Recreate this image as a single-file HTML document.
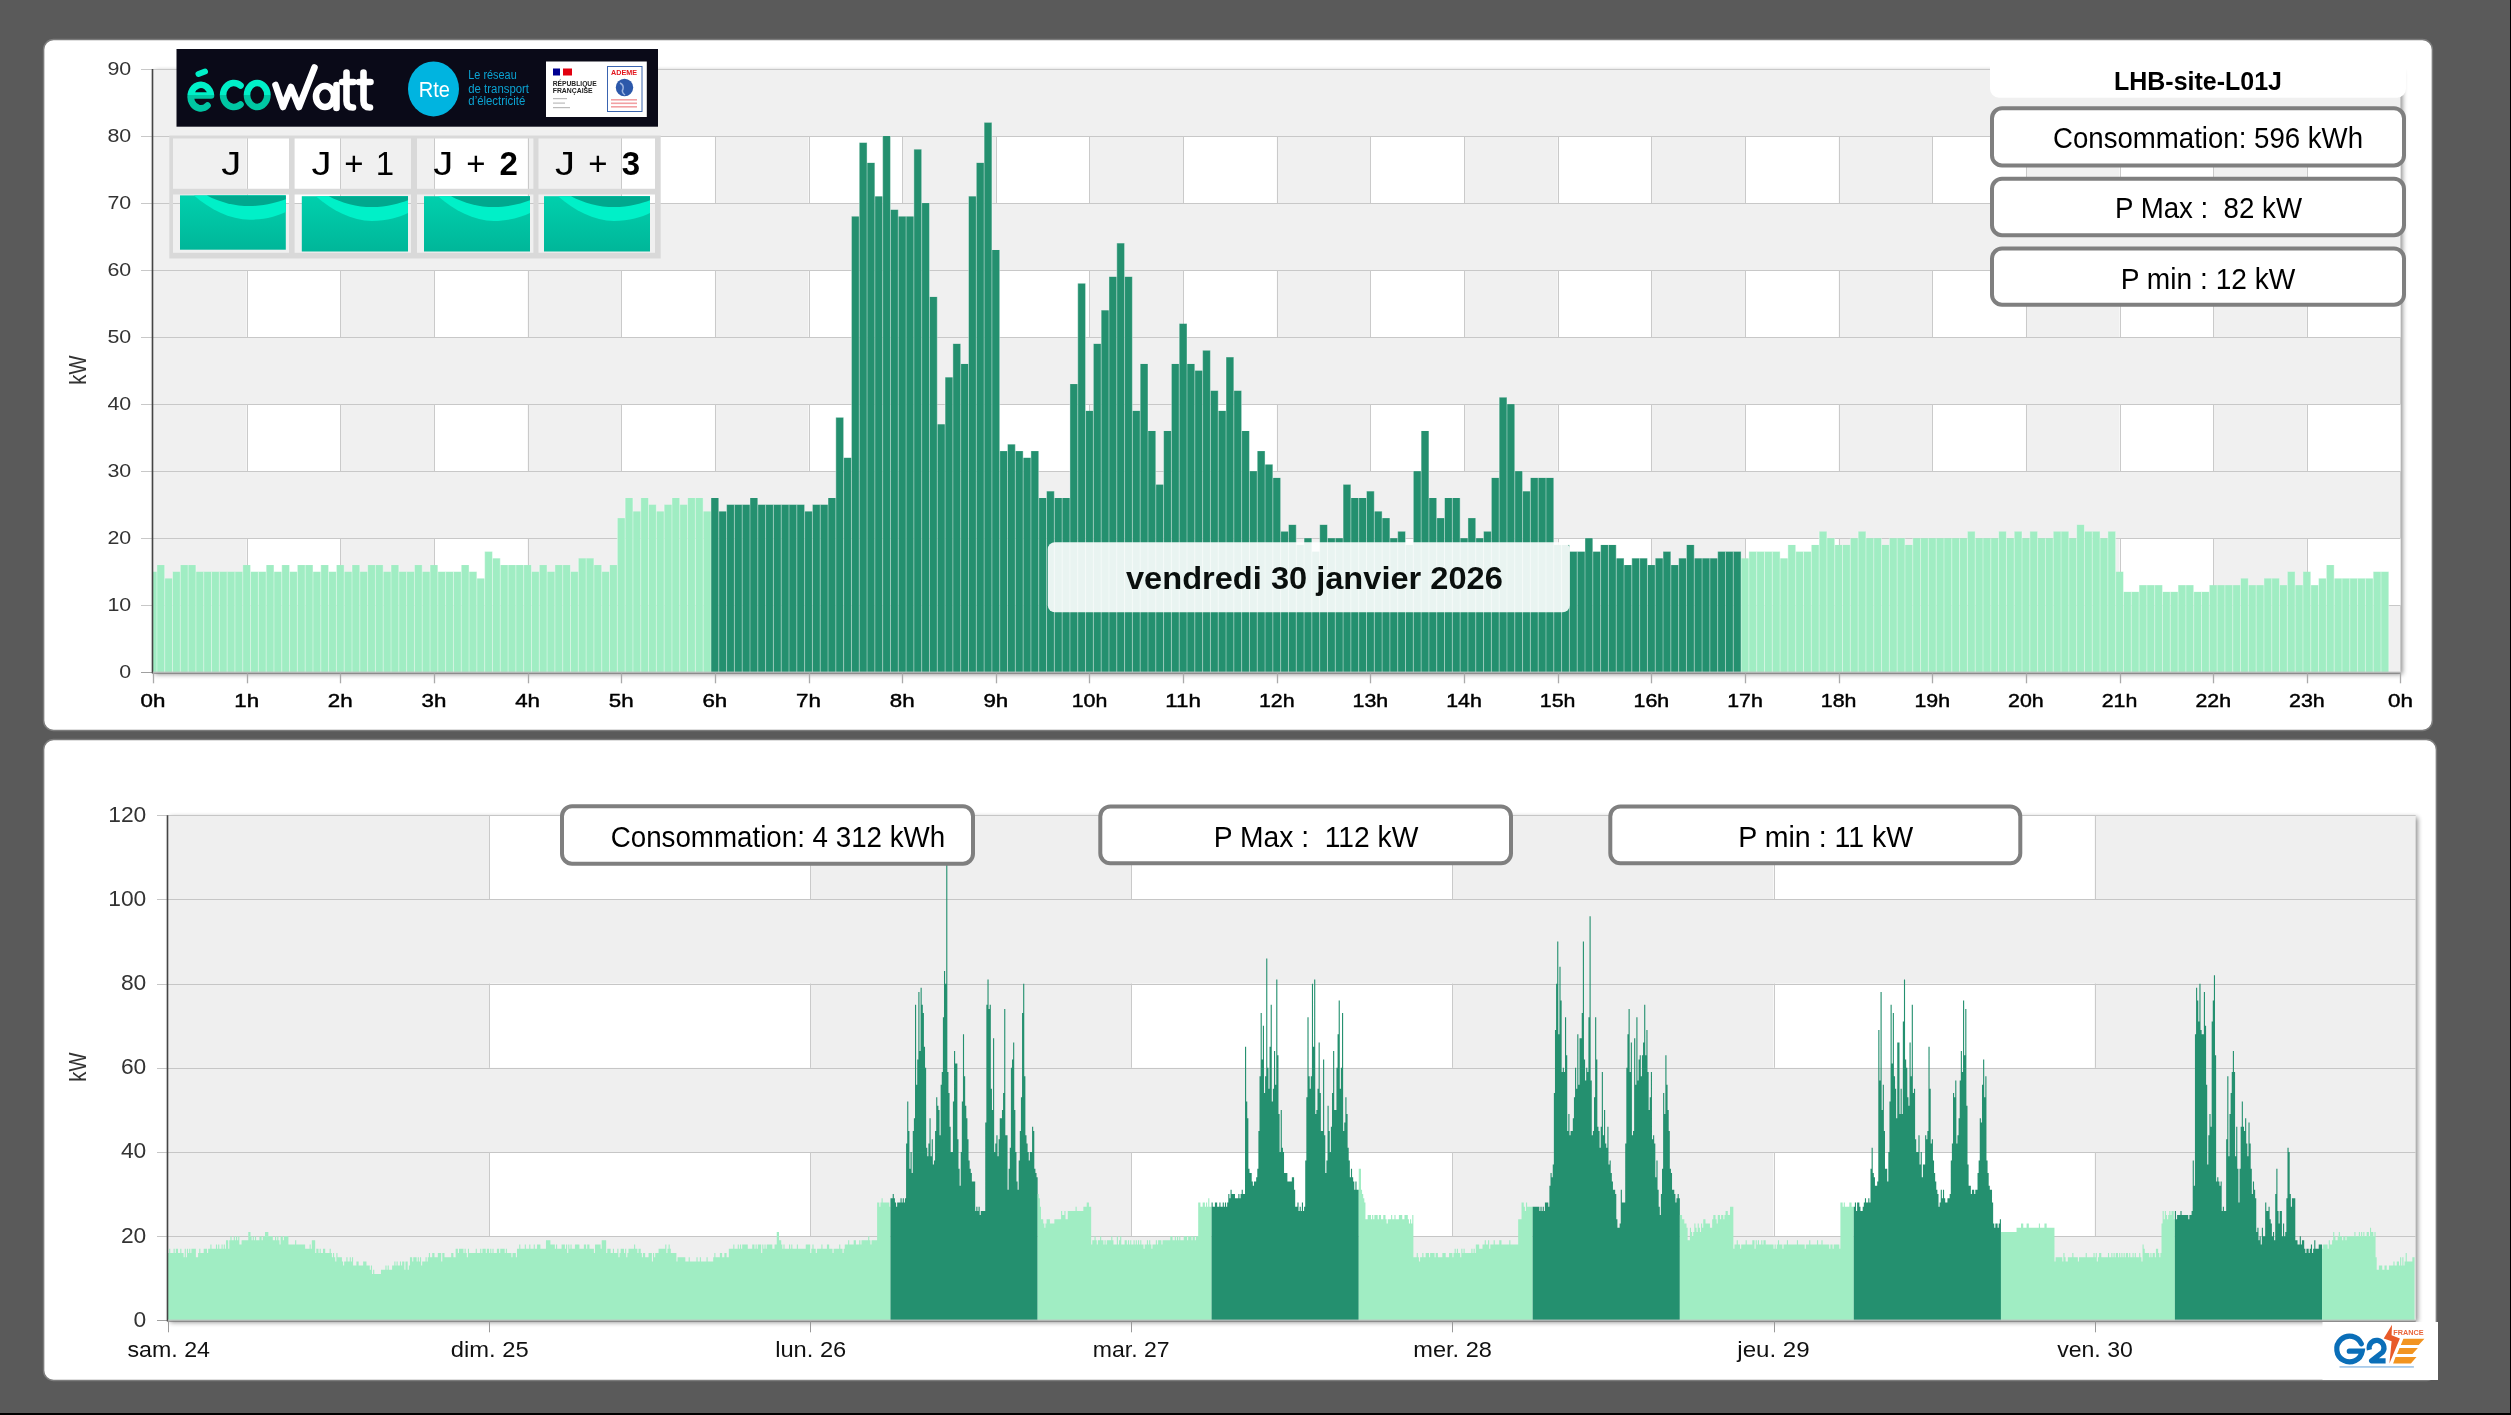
<!DOCTYPE html>
<html><head><meta charset="utf-8"><style>html,body{margin:0;padding:0;background:#5a5a5a;overflow:hidden;width:2511px;height:1415px} svg text{font-family:"Liberation Sans", sans-serif}</style></head>
<body><svg width="2511" height="1415" viewBox="0 0 2511 1415" style="display:block;will-change:transform"><rect x="0" y="0" width="2511" height="1415" fill="#5a5a5a"/>
<rect x="2510" y="0" width="1" height="1415" fill="#000"/>
<rect x="0" y="1413" width="2511" height="2" fill="#000"/>
<rect x="43.6" y="39.6" width="2388.8" height="690.8" rx="10" fill="#fff" stroke="#7c7c7c" stroke-width="1.5"/>
<rect x="43.6" y="739.6" width="2392.8" height="640.8" rx="10" fill="#fff" stroke="#7c7c7c" stroke-width="1.5"/>
<defs><filter id="sh" x="-5%" y="-5%" width="110%" height="110%"><feGaussianBlur stdDeviation="2.5"/></filter><linearGradient id="tealg" x1="0" y1="0" x2="0" y2="1"><stop offset="0" stop-color="#00d0ad"/><stop offset="1" stop-color="#00b699"/></linearGradient><linearGradient id="ecog" x1="0" y1="0" x2="0" y2="1"><stop offset="0.62" stop-color="#00f0c8"/><stop offset="0.62" stop-color="#00c4a2"/></linearGradient><linearGradient id="ecog2" gradientUnits="userSpaceOnUse" x1="0" y1="60" x2="0" y2="112"><stop offset="0.68" stop-color="#00f0c8"/><stop offset="0.68" stop-color="#00c6a3"/></linearGradient></defs>
<rect x="155.0" y="71.0" width="2247.5" height="603.3" fill="#000" opacity="0.45" filter="url(#sh)"/>
<rect x="153.0" y="69.0" width="2247.5" height="603.3" fill="#f0f0f0"/>
<rect x="246.65" y="538.23" width="93.65" height="67.03" fill="#fff"/>
<rect x="433.94" y="538.23" width="93.65" height="67.03" fill="#fff"/>
<rect x="621.23" y="538.23" width="93.65" height="67.03" fill="#fff"/>
<rect x="808.52" y="538.23" width="93.65" height="67.03" fill="#fff"/>
<rect x="995.81" y="538.23" width="93.65" height="67.03" fill="#fff"/>
<rect x="1183.10" y="538.23" width="93.65" height="67.03" fill="#fff"/>
<rect x="1370.40" y="538.23" width="93.65" height="67.03" fill="#fff"/>
<rect x="1557.69" y="538.23" width="93.65" height="67.03" fill="#fff"/>
<rect x="1744.98" y="538.23" width="93.65" height="67.03" fill="#fff"/>
<rect x="1932.27" y="538.23" width="93.65" height="67.03" fill="#fff"/>
<rect x="2119.56" y="538.23" width="93.65" height="67.03" fill="#fff"/>
<rect x="2306.85" y="538.23" width="93.65" height="67.03" fill="#fff"/>
<rect x="246.65" y="404.17" width="93.65" height="67.03" fill="#fff"/>
<rect x="433.94" y="404.17" width="93.65" height="67.03" fill="#fff"/>
<rect x="621.23" y="404.17" width="93.65" height="67.03" fill="#fff"/>
<rect x="808.52" y="404.17" width="93.65" height="67.03" fill="#fff"/>
<rect x="995.81" y="404.17" width="93.65" height="67.03" fill="#fff"/>
<rect x="1183.10" y="404.17" width="93.65" height="67.03" fill="#fff"/>
<rect x="1370.40" y="404.17" width="93.65" height="67.03" fill="#fff"/>
<rect x="1557.69" y="404.17" width="93.65" height="67.03" fill="#fff"/>
<rect x="1744.98" y="404.17" width="93.65" height="67.03" fill="#fff"/>
<rect x="1932.27" y="404.17" width="93.65" height="67.03" fill="#fff"/>
<rect x="2119.56" y="404.17" width="93.65" height="67.03" fill="#fff"/>
<rect x="2306.85" y="404.17" width="93.65" height="67.03" fill="#fff"/>
<rect x="246.65" y="270.10" width="93.65" height="67.03" fill="#fff"/>
<rect x="433.94" y="270.10" width="93.65" height="67.03" fill="#fff"/>
<rect x="621.23" y="270.10" width="93.65" height="67.03" fill="#fff"/>
<rect x="808.52" y="270.10" width="93.65" height="67.03" fill="#fff"/>
<rect x="995.81" y="270.10" width="93.65" height="67.03" fill="#fff"/>
<rect x="1183.10" y="270.10" width="93.65" height="67.03" fill="#fff"/>
<rect x="1370.40" y="270.10" width="93.65" height="67.03" fill="#fff"/>
<rect x="1557.69" y="270.10" width="93.65" height="67.03" fill="#fff"/>
<rect x="1744.98" y="270.10" width="93.65" height="67.03" fill="#fff"/>
<rect x="1932.27" y="270.10" width="93.65" height="67.03" fill="#fff"/>
<rect x="2119.56" y="270.10" width="93.65" height="67.03" fill="#fff"/>
<rect x="2306.85" y="270.10" width="93.65" height="67.03" fill="#fff"/>
<rect x="246.65" y="136.03" width="93.65" height="67.03" fill="#fff"/>
<rect x="433.94" y="136.03" width="93.65" height="67.03" fill="#fff"/>
<rect x="621.23" y="136.03" width="93.65" height="67.03" fill="#fff"/>
<rect x="808.52" y="136.03" width="93.65" height="67.03" fill="#fff"/>
<rect x="995.81" y="136.03" width="93.65" height="67.03" fill="#fff"/>
<rect x="1183.10" y="136.03" width="93.65" height="67.03" fill="#fff"/>
<rect x="1370.40" y="136.03" width="93.65" height="67.03" fill="#fff"/>
<rect x="1557.69" y="136.03" width="93.65" height="67.03" fill="#fff"/>
<rect x="1744.98" y="136.03" width="93.65" height="67.03" fill="#fff"/>
<rect x="1932.27" y="136.03" width="93.65" height="67.03" fill="#fff"/>
<rect x="2119.56" y="136.03" width="93.65" height="67.03" fill="#fff"/>
<rect x="2306.85" y="136.03" width="93.65" height="67.03" fill="#fff"/>
<line x1="141.0" y1="605.5" x2="2400.5" y2="605.5" stroke="#c8c8c8" stroke-width="1"/>
<line x1="141.0" y1="538.5" x2="2400.5" y2="538.5" stroke="#c8c8c8" stroke-width="1"/>
<line x1="141.0" y1="471.5" x2="2400.5" y2="471.5" stroke="#c8c8c8" stroke-width="1"/>
<line x1="141.0" y1="404.5" x2="2400.5" y2="404.5" stroke="#c8c8c8" stroke-width="1"/>
<line x1="141.0" y1="337.5" x2="2400.5" y2="337.5" stroke="#c8c8c8" stroke-width="1"/>
<line x1="141.0" y1="270.5" x2="2400.5" y2="270.5" stroke="#c8c8c8" stroke-width="1"/>
<line x1="141.0" y1="203.5" x2="2400.5" y2="203.5" stroke="#c8c8c8" stroke-width="1"/>
<line x1="141.0" y1="136.5" x2="2400.5" y2="136.5" stroke="#c8c8c8" stroke-width="1"/>
<line x1="141.0" y1="69.5" x2="2400.5" y2="69.5" stroke="#c8c8c8" stroke-width="1"/>
<line x1="247.5" y1="538.23" x2="247.5" y2="605.27" stroke="#cacaca" stroke-width="1"/>
<line x1="340.5" y1="538.23" x2="340.5" y2="605.27" stroke="#cacaca" stroke-width="1"/>
<line x1="434.5" y1="538.23" x2="434.5" y2="605.27" stroke="#cacaca" stroke-width="1"/>
<line x1="528.5" y1="538.23" x2="528.5" y2="605.27" stroke="#cacaca" stroke-width="1"/>
<line x1="621.5" y1="538.23" x2="621.5" y2="605.27" stroke="#cacaca" stroke-width="1"/>
<line x1="715.5" y1="538.23" x2="715.5" y2="605.27" stroke="#cacaca" stroke-width="1"/>
<line x1="809.5" y1="538.23" x2="809.5" y2="605.27" stroke="#cacaca" stroke-width="1"/>
<line x1="902.5" y1="538.23" x2="902.5" y2="605.27" stroke="#cacaca" stroke-width="1"/>
<line x1="996.5" y1="538.23" x2="996.5" y2="605.27" stroke="#cacaca" stroke-width="1"/>
<line x1="1089.5" y1="538.23" x2="1089.5" y2="605.27" stroke="#cacaca" stroke-width="1"/>
<line x1="1183.5" y1="538.23" x2="1183.5" y2="605.27" stroke="#cacaca" stroke-width="1"/>
<line x1="1277.5" y1="538.23" x2="1277.5" y2="605.27" stroke="#cacaca" stroke-width="1"/>
<line x1="1370.5" y1="538.23" x2="1370.5" y2="605.27" stroke="#cacaca" stroke-width="1"/>
<line x1="1464.5" y1="538.23" x2="1464.5" y2="605.27" stroke="#cacaca" stroke-width="1"/>
<line x1="1558.5" y1="538.23" x2="1558.5" y2="605.27" stroke="#cacaca" stroke-width="1"/>
<line x1="1651.5" y1="538.23" x2="1651.5" y2="605.27" stroke="#cacaca" stroke-width="1"/>
<line x1="1745.5" y1="538.23" x2="1745.5" y2="605.27" stroke="#cacaca" stroke-width="1"/>
<line x1="1839.5" y1="538.23" x2="1839.5" y2="605.27" stroke="#cacaca" stroke-width="1"/>
<line x1="1932.5" y1="538.23" x2="1932.5" y2="605.27" stroke="#cacaca" stroke-width="1"/>
<line x1="2026.5" y1="538.23" x2="2026.5" y2="605.27" stroke="#cacaca" stroke-width="1"/>
<line x1="2120.5" y1="538.23" x2="2120.5" y2="605.27" stroke="#cacaca" stroke-width="1"/>
<line x1="2213.5" y1="538.23" x2="2213.5" y2="605.27" stroke="#cacaca" stroke-width="1"/>
<line x1="2307.5" y1="538.23" x2="2307.5" y2="605.27" stroke="#cacaca" stroke-width="1"/>
<line x1="247.5" y1="404.17" x2="247.5" y2="471.20" stroke="#cacaca" stroke-width="1"/>
<line x1="340.5" y1="404.17" x2="340.5" y2="471.20" stroke="#cacaca" stroke-width="1"/>
<line x1="434.5" y1="404.17" x2="434.5" y2="471.20" stroke="#cacaca" stroke-width="1"/>
<line x1="528.5" y1="404.17" x2="528.5" y2="471.20" stroke="#cacaca" stroke-width="1"/>
<line x1="621.5" y1="404.17" x2="621.5" y2="471.20" stroke="#cacaca" stroke-width="1"/>
<line x1="715.5" y1="404.17" x2="715.5" y2="471.20" stroke="#cacaca" stroke-width="1"/>
<line x1="809.5" y1="404.17" x2="809.5" y2="471.20" stroke="#cacaca" stroke-width="1"/>
<line x1="902.5" y1="404.17" x2="902.5" y2="471.20" stroke="#cacaca" stroke-width="1"/>
<line x1="996.5" y1="404.17" x2="996.5" y2="471.20" stroke="#cacaca" stroke-width="1"/>
<line x1="1089.5" y1="404.17" x2="1089.5" y2="471.20" stroke="#cacaca" stroke-width="1"/>
<line x1="1183.5" y1="404.17" x2="1183.5" y2="471.20" stroke="#cacaca" stroke-width="1"/>
<line x1="1277.5" y1="404.17" x2="1277.5" y2="471.20" stroke="#cacaca" stroke-width="1"/>
<line x1="1370.5" y1="404.17" x2="1370.5" y2="471.20" stroke="#cacaca" stroke-width="1"/>
<line x1="1464.5" y1="404.17" x2="1464.5" y2="471.20" stroke="#cacaca" stroke-width="1"/>
<line x1="1558.5" y1="404.17" x2="1558.5" y2="471.20" stroke="#cacaca" stroke-width="1"/>
<line x1="1651.5" y1="404.17" x2="1651.5" y2="471.20" stroke="#cacaca" stroke-width="1"/>
<line x1="1745.5" y1="404.17" x2="1745.5" y2="471.20" stroke="#cacaca" stroke-width="1"/>
<line x1="1839.5" y1="404.17" x2="1839.5" y2="471.20" stroke="#cacaca" stroke-width="1"/>
<line x1="1932.5" y1="404.17" x2="1932.5" y2="471.20" stroke="#cacaca" stroke-width="1"/>
<line x1="2026.5" y1="404.17" x2="2026.5" y2="471.20" stroke="#cacaca" stroke-width="1"/>
<line x1="2120.5" y1="404.17" x2="2120.5" y2="471.20" stroke="#cacaca" stroke-width="1"/>
<line x1="2213.5" y1="404.17" x2="2213.5" y2="471.20" stroke="#cacaca" stroke-width="1"/>
<line x1="2307.5" y1="404.17" x2="2307.5" y2="471.20" stroke="#cacaca" stroke-width="1"/>
<line x1="247.5" y1="270.10" x2="247.5" y2="337.13" stroke="#cacaca" stroke-width="1"/>
<line x1="340.5" y1="270.10" x2="340.5" y2="337.13" stroke="#cacaca" stroke-width="1"/>
<line x1="434.5" y1="270.10" x2="434.5" y2="337.13" stroke="#cacaca" stroke-width="1"/>
<line x1="528.5" y1="270.10" x2="528.5" y2="337.13" stroke="#cacaca" stroke-width="1"/>
<line x1="621.5" y1="270.10" x2="621.5" y2="337.13" stroke="#cacaca" stroke-width="1"/>
<line x1="715.5" y1="270.10" x2="715.5" y2="337.13" stroke="#cacaca" stroke-width="1"/>
<line x1="809.5" y1="270.10" x2="809.5" y2="337.13" stroke="#cacaca" stroke-width="1"/>
<line x1="902.5" y1="270.10" x2="902.5" y2="337.13" stroke="#cacaca" stroke-width="1"/>
<line x1="996.5" y1="270.10" x2="996.5" y2="337.13" stroke="#cacaca" stroke-width="1"/>
<line x1="1089.5" y1="270.10" x2="1089.5" y2="337.13" stroke="#cacaca" stroke-width="1"/>
<line x1="1183.5" y1="270.10" x2="1183.5" y2="337.13" stroke="#cacaca" stroke-width="1"/>
<line x1="1277.5" y1="270.10" x2="1277.5" y2="337.13" stroke="#cacaca" stroke-width="1"/>
<line x1="1370.5" y1="270.10" x2="1370.5" y2="337.13" stroke="#cacaca" stroke-width="1"/>
<line x1="1464.5" y1="270.10" x2="1464.5" y2="337.13" stroke="#cacaca" stroke-width="1"/>
<line x1="1558.5" y1="270.10" x2="1558.5" y2="337.13" stroke="#cacaca" stroke-width="1"/>
<line x1="1651.5" y1="270.10" x2="1651.5" y2="337.13" stroke="#cacaca" stroke-width="1"/>
<line x1="1745.5" y1="270.10" x2="1745.5" y2="337.13" stroke="#cacaca" stroke-width="1"/>
<line x1="1839.5" y1="270.10" x2="1839.5" y2="337.13" stroke="#cacaca" stroke-width="1"/>
<line x1="1932.5" y1="270.10" x2="1932.5" y2="337.13" stroke="#cacaca" stroke-width="1"/>
<line x1="2026.5" y1="270.10" x2="2026.5" y2="337.13" stroke="#cacaca" stroke-width="1"/>
<line x1="2120.5" y1="270.10" x2="2120.5" y2="337.13" stroke="#cacaca" stroke-width="1"/>
<line x1="2213.5" y1="270.10" x2="2213.5" y2="337.13" stroke="#cacaca" stroke-width="1"/>
<line x1="2307.5" y1="270.10" x2="2307.5" y2="337.13" stroke="#cacaca" stroke-width="1"/>
<line x1="247.5" y1="136.03" x2="247.5" y2="203.07" stroke="#cacaca" stroke-width="1"/>
<line x1="340.5" y1="136.03" x2="340.5" y2="203.07" stroke="#cacaca" stroke-width="1"/>
<line x1="434.5" y1="136.03" x2="434.5" y2="203.07" stroke="#cacaca" stroke-width="1"/>
<line x1="528.5" y1="136.03" x2="528.5" y2="203.07" stroke="#cacaca" stroke-width="1"/>
<line x1="621.5" y1="136.03" x2="621.5" y2="203.07" stroke="#cacaca" stroke-width="1"/>
<line x1="715.5" y1="136.03" x2="715.5" y2="203.07" stroke="#cacaca" stroke-width="1"/>
<line x1="809.5" y1="136.03" x2="809.5" y2="203.07" stroke="#cacaca" stroke-width="1"/>
<line x1="902.5" y1="136.03" x2="902.5" y2="203.07" stroke="#cacaca" stroke-width="1"/>
<line x1="996.5" y1="136.03" x2="996.5" y2="203.07" stroke="#cacaca" stroke-width="1"/>
<line x1="1089.5" y1="136.03" x2="1089.5" y2="203.07" stroke="#cacaca" stroke-width="1"/>
<line x1="1183.5" y1="136.03" x2="1183.5" y2="203.07" stroke="#cacaca" stroke-width="1"/>
<line x1="1277.5" y1="136.03" x2="1277.5" y2="203.07" stroke="#cacaca" stroke-width="1"/>
<line x1="1370.5" y1="136.03" x2="1370.5" y2="203.07" stroke="#cacaca" stroke-width="1"/>
<line x1="1464.5" y1="136.03" x2="1464.5" y2="203.07" stroke="#cacaca" stroke-width="1"/>
<line x1="1558.5" y1="136.03" x2="1558.5" y2="203.07" stroke="#cacaca" stroke-width="1"/>
<line x1="1651.5" y1="136.03" x2="1651.5" y2="203.07" stroke="#cacaca" stroke-width="1"/>
<line x1="1745.5" y1="136.03" x2="1745.5" y2="203.07" stroke="#cacaca" stroke-width="1"/>
<line x1="1839.5" y1="136.03" x2="1839.5" y2="203.07" stroke="#cacaca" stroke-width="1"/>
<line x1="1932.5" y1="136.03" x2="1932.5" y2="203.07" stroke="#cacaca" stroke-width="1"/>
<line x1="2026.5" y1="136.03" x2="2026.5" y2="203.07" stroke="#cacaca" stroke-width="1"/>
<line x1="2120.5" y1="136.03" x2="2120.5" y2="203.07" stroke="#cacaca" stroke-width="1"/>
<line x1="2213.5" y1="136.03" x2="2213.5" y2="203.07" stroke="#cacaca" stroke-width="1"/>
<line x1="2307.5" y1="136.03" x2="2307.5" y2="203.07" stroke="#cacaca" stroke-width="1"/>
<line x1="141.0" y1="672.5" x2="153.0" y2="672.5" stroke="#a0a0a0" stroke-width="1"/>
<rect x="153.00" y="571.75" width="3.90" height="100.55" fill="#a0edc3"/>
<rect x="156.90" y="565.05" width="7.80" height="107.25" fill="#a0edc3"/>
<rect x="164.71" y="578.45" width="7.80" height="93.85" fill="#a0edc3"/>
<rect x="172.51" y="571.75" width="7.80" height="100.55" fill="#a0edc3"/>
<rect x="180.31" y="565.05" width="7.80" height="107.25" fill="#a0edc3"/>
<rect x="188.12" y="565.05" width="7.80" height="107.25" fill="#a0edc3"/>
<rect x="195.92" y="571.75" width="7.80" height="100.55" fill="#a0edc3"/>
<rect x="203.72" y="571.75" width="7.80" height="100.55" fill="#a0edc3"/>
<rect x="211.53" y="571.75" width="7.80" height="100.55" fill="#a0edc3"/>
<rect x="219.33" y="571.75" width="7.80" height="100.55" fill="#a0edc3"/>
<rect x="227.14" y="571.75" width="7.80" height="100.55" fill="#a0edc3"/>
<rect x="234.94" y="571.75" width="7.80" height="100.55" fill="#a0edc3"/>
<rect x="242.74" y="565.05" width="7.80" height="107.25" fill="#a0edc3"/>
<rect x="250.55" y="571.75" width="7.80" height="100.55" fill="#a0edc3"/>
<rect x="258.35" y="571.75" width="7.80" height="100.55" fill="#a0edc3"/>
<rect x="266.16" y="565.05" width="7.80" height="107.25" fill="#a0edc3"/>
<rect x="273.96" y="571.75" width="7.80" height="100.55" fill="#a0edc3"/>
<rect x="281.76" y="565.05" width="7.80" height="107.25" fill="#a0edc3"/>
<rect x="289.57" y="571.75" width="7.80" height="100.55" fill="#a0edc3"/>
<rect x="297.37" y="565.05" width="7.80" height="107.25" fill="#a0edc3"/>
<rect x="305.17" y="565.05" width="7.80" height="107.25" fill="#a0edc3"/>
<rect x="312.98" y="571.75" width="7.80" height="100.55" fill="#a0edc3"/>
<rect x="320.78" y="565.05" width="7.80" height="107.25" fill="#a0edc3"/>
<rect x="328.59" y="571.75" width="7.80" height="100.55" fill="#a0edc3"/>
<rect x="336.39" y="565.05" width="7.80" height="107.25" fill="#a0edc3"/>
<rect x="344.19" y="571.75" width="7.80" height="100.55" fill="#a0edc3"/>
<rect x="352.00" y="565.05" width="7.80" height="107.25" fill="#a0edc3"/>
<rect x="359.80" y="571.75" width="7.80" height="100.55" fill="#a0edc3"/>
<rect x="367.61" y="565.05" width="7.80" height="107.25" fill="#a0edc3"/>
<rect x="375.41" y="565.05" width="7.80" height="107.25" fill="#a0edc3"/>
<rect x="383.21" y="571.75" width="7.80" height="100.55" fill="#a0edc3"/>
<rect x="391.02" y="565.05" width="7.80" height="107.25" fill="#a0edc3"/>
<rect x="398.82" y="571.75" width="7.80" height="100.55" fill="#a0edc3"/>
<rect x="406.62" y="571.75" width="7.80" height="100.55" fill="#a0edc3"/>
<rect x="414.43" y="565.05" width="7.80" height="107.25" fill="#a0edc3"/>
<rect x="422.23" y="571.75" width="7.80" height="100.55" fill="#a0edc3"/>
<rect x="430.04" y="565.05" width="7.80" height="107.25" fill="#a0edc3"/>
<rect x="437.84" y="571.75" width="7.80" height="100.55" fill="#a0edc3"/>
<rect x="445.64" y="571.75" width="7.80" height="100.55" fill="#a0edc3"/>
<rect x="453.45" y="571.75" width="7.80" height="100.55" fill="#a0edc3"/>
<rect x="461.25" y="565.05" width="7.80" height="107.25" fill="#a0edc3"/>
<rect x="469.05" y="571.75" width="7.80" height="100.55" fill="#a0edc3"/>
<rect x="476.86" y="578.45" width="7.80" height="93.85" fill="#a0edc3"/>
<rect x="484.66" y="551.64" width="7.80" height="120.66" fill="#a0edc3"/>
<rect x="492.47" y="558.34" width="7.80" height="113.96" fill="#a0edc3"/>
<rect x="500.27" y="565.05" width="7.80" height="107.25" fill="#a0edc3"/>
<rect x="508.07" y="565.05" width="7.80" height="107.25" fill="#a0edc3"/>
<rect x="515.88" y="565.05" width="7.80" height="107.25" fill="#a0edc3"/>
<rect x="523.68" y="565.05" width="7.80" height="107.25" fill="#a0edc3"/>
<rect x="531.49" y="571.75" width="7.80" height="100.55" fill="#a0edc3"/>
<rect x="539.29" y="565.05" width="7.80" height="107.25" fill="#a0edc3"/>
<rect x="547.09" y="571.75" width="7.80" height="100.55" fill="#a0edc3"/>
<rect x="554.90" y="565.05" width="7.80" height="107.25" fill="#a0edc3"/>
<rect x="562.70" y="565.05" width="7.80" height="107.25" fill="#a0edc3"/>
<rect x="570.50" y="571.75" width="7.80" height="100.55" fill="#a0edc3"/>
<rect x="578.31" y="558.34" width="7.80" height="113.96" fill="#a0edc3"/>
<rect x="586.11" y="558.34" width="7.80" height="113.96" fill="#a0edc3"/>
<rect x="593.92" y="565.05" width="7.80" height="107.25" fill="#a0edc3"/>
<rect x="601.72" y="571.75" width="7.80" height="100.55" fill="#a0edc3"/>
<rect x="609.52" y="565.05" width="7.80" height="107.25" fill="#a0edc3"/>
<rect x="617.33" y="518.12" width="7.80" height="154.18" fill="#a0edc3"/>
<rect x="625.13" y="498.01" width="7.80" height="174.29" fill="#a0edc3"/>
<rect x="632.93" y="511.42" width="7.80" height="160.88" fill="#a0edc3"/>
<rect x="640.74" y="498.01" width="7.80" height="174.29" fill="#a0edc3"/>
<rect x="648.54" y="504.72" width="7.80" height="167.58" fill="#a0edc3"/>
<rect x="656.35" y="511.42" width="7.80" height="160.88" fill="#a0edc3"/>
<rect x="664.15" y="504.72" width="7.80" height="167.58" fill="#a0edc3"/>
<rect x="671.95" y="498.01" width="7.80" height="174.29" fill="#a0edc3"/>
<rect x="679.76" y="504.72" width="7.80" height="167.58" fill="#a0edc3"/>
<rect x="687.56" y="498.01" width="7.80" height="174.29" fill="#a0edc3"/>
<rect x="695.37" y="498.01" width="7.80" height="174.29" fill="#a0edc3"/>
<rect x="703.17" y="511.42" width="7.80" height="160.88" fill="#a0edc3"/>
<rect x="710.97" y="498.01" width="7.80" height="174.29" fill="#24906f"/>
<rect x="718.78" y="511.42" width="7.80" height="160.88" fill="#24906f"/>
<rect x="726.58" y="504.72" width="7.80" height="167.58" fill="#24906f"/>
<rect x="734.38" y="504.72" width="7.80" height="167.58" fill="#24906f"/>
<rect x="742.19" y="504.72" width="7.80" height="167.58" fill="#24906f"/>
<rect x="749.99" y="498.01" width="7.80" height="174.29" fill="#24906f"/>
<rect x="757.80" y="504.72" width="7.80" height="167.58" fill="#24906f"/>
<rect x="765.60" y="504.72" width="7.80" height="167.58" fill="#24906f"/>
<rect x="773.40" y="504.72" width="7.80" height="167.58" fill="#24906f"/>
<rect x="781.21" y="504.72" width="7.80" height="167.58" fill="#24906f"/>
<rect x="789.01" y="504.72" width="7.80" height="167.58" fill="#24906f"/>
<rect x="796.82" y="504.72" width="7.80" height="167.58" fill="#24906f"/>
<rect x="804.62" y="511.42" width="7.80" height="160.88" fill="#24906f"/>
<rect x="812.42" y="504.72" width="7.80" height="167.58" fill="#24906f"/>
<rect x="820.23" y="504.72" width="7.80" height="167.58" fill="#24906f"/>
<rect x="828.03" y="498.01" width="7.80" height="174.29" fill="#24906f"/>
<rect x="835.83" y="417.57" width="7.80" height="254.73" fill="#24906f"/>
<rect x="843.64" y="457.79" width="7.80" height="214.51" fill="#24906f"/>
<rect x="851.44" y="216.47" width="7.80" height="455.83" fill="#24906f"/>
<rect x="859.25" y="142.74" width="7.80" height="529.56" fill="#24906f"/>
<rect x="867.05" y="162.85" width="7.80" height="509.45" fill="#24906f"/>
<rect x="874.85" y="196.36" width="7.80" height="475.94" fill="#24906f"/>
<rect x="882.66" y="136.03" width="7.80" height="536.27" fill="#24906f"/>
<rect x="890.46" y="209.77" width="7.80" height="462.53" fill="#24906f"/>
<rect x="898.26" y="216.47" width="7.80" height="455.83" fill="#24906f"/>
<rect x="906.07" y="216.47" width="7.80" height="455.83" fill="#24906f"/>
<rect x="913.87" y="149.44" width="7.80" height="522.86" fill="#24906f"/>
<rect x="921.68" y="203.07" width="7.80" height="469.23" fill="#24906f"/>
<rect x="929.48" y="296.91" width="7.80" height="375.39" fill="#24906f"/>
<rect x="937.28" y="424.28" width="7.80" height="248.02" fill="#24906f"/>
<rect x="945.09" y="377.35" width="7.80" height="294.95" fill="#24906f"/>
<rect x="952.89" y="343.84" width="7.80" height="328.46" fill="#24906f"/>
<rect x="960.70" y="363.95" width="7.80" height="308.35" fill="#24906f"/>
<rect x="968.50" y="196.36" width="7.80" height="475.94" fill="#24906f"/>
<rect x="976.30" y="162.85" width="7.80" height="509.45" fill="#24906f"/>
<rect x="984.11" y="122.63" width="7.80" height="549.67" fill="#24906f"/>
<rect x="991.91" y="249.99" width="7.80" height="422.31" fill="#24906f"/>
<rect x="999.71" y="451.09" width="7.80" height="221.21" fill="#24906f"/>
<rect x="1007.52" y="444.39" width="7.80" height="227.91" fill="#24906f"/>
<rect x="1015.32" y="451.09" width="7.80" height="221.21" fill="#24906f"/>
<rect x="1023.13" y="457.79" width="7.80" height="214.51" fill="#24906f"/>
<rect x="1030.93" y="451.09" width="7.80" height="221.21" fill="#24906f"/>
<rect x="1038.73" y="498.01" width="7.80" height="174.29" fill="#24906f"/>
<rect x="1046.54" y="491.31" width="7.80" height="180.99" fill="#24906f"/>
<rect x="1054.34" y="498.01" width="7.80" height="174.29" fill="#24906f"/>
<rect x="1062.14" y="498.01" width="7.80" height="174.29" fill="#24906f"/>
<rect x="1069.95" y="384.06" width="7.80" height="288.24" fill="#24906f"/>
<rect x="1077.75" y="283.51" width="7.80" height="388.79" fill="#24906f"/>
<rect x="1085.56" y="410.87" width="7.80" height="261.43" fill="#24906f"/>
<rect x="1093.36" y="343.84" width="7.80" height="328.46" fill="#24906f"/>
<rect x="1101.16" y="310.32" width="7.80" height="361.98" fill="#24906f"/>
<rect x="1108.97" y="276.80" width="7.80" height="395.50" fill="#24906f"/>
<rect x="1116.77" y="243.29" width="7.80" height="429.01" fill="#24906f"/>
<rect x="1124.58" y="276.80" width="7.80" height="395.50" fill="#24906f"/>
<rect x="1132.38" y="410.87" width="7.80" height="261.43" fill="#24906f"/>
<rect x="1140.18" y="363.95" width="7.80" height="308.35" fill="#24906f"/>
<rect x="1147.99" y="430.98" width="7.80" height="241.32" fill="#24906f"/>
<rect x="1155.79" y="484.61" width="7.80" height="187.69" fill="#24906f"/>
<rect x="1163.59" y="430.98" width="7.80" height="241.32" fill="#24906f"/>
<rect x="1171.40" y="363.95" width="7.80" height="308.35" fill="#24906f"/>
<rect x="1179.20" y="323.73" width="7.80" height="348.57" fill="#24906f"/>
<rect x="1187.01" y="363.95" width="7.80" height="308.35" fill="#24906f"/>
<rect x="1194.81" y="370.65" width="7.80" height="301.65" fill="#24906f"/>
<rect x="1202.61" y="350.54" width="7.80" height="321.76" fill="#24906f"/>
<rect x="1210.42" y="390.76" width="7.80" height="281.54" fill="#24906f"/>
<rect x="1218.22" y="410.87" width="7.80" height="261.43" fill="#24906f"/>
<rect x="1226.03" y="357.24" width="7.80" height="315.06" fill="#24906f"/>
<rect x="1233.83" y="390.76" width="7.80" height="281.54" fill="#24906f"/>
<rect x="1241.63" y="430.98" width="7.80" height="241.32" fill="#24906f"/>
<rect x="1249.44" y="471.20" width="7.80" height="201.10" fill="#24906f"/>
<rect x="1257.24" y="451.09" width="7.80" height="221.21" fill="#24906f"/>
<rect x="1265.04" y="464.50" width="7.80" height="207.80" fill="#24906f"/>
<rect x="1272.85" y="477.90" width="7.80" height="194.40" fill="#24906f"/>
<rect x="1280.65" y="531.53" width="7.80" height="140.77" fill="#24906f"/>
<rect x="1288.46" y="524.83" width="7.80" height="147.47" fill="#24906f"/>
<rect x="1296.26" y="544.94" width="7.80" height="127.36" fill="#24906f"/>
<rect x="1304.06" y="538.23" width="7.80" height="134.07" fill="#24906f"/>
<rect x="1311.87" y="551.64" width="7.80" height="120.66" fill="#24906f"/>
<rect x="1319.67" y="524.83" width="7.80" height="147.47" fill="#24906f"/>
<rect x="1327.47" y="538.23" width="7.80" height="134.07" fill="#24906f"/>
<rect x="1335.28" y="538.23" width="7.80" height="134.07" fill="#24906f"/>
<rect x="1343.08" y="484.61" width="7.80" height="187.69" fill="#24906f"/>
<rect x="1350.89" y="498.01" width="7.80" height="174.29" fill="#24906f"/>
<rect x="1358.69" y="498.01" width="7.80" height="174.29" fill="#24906f"/>
<rect x="1366.49" y="491.31" width="7.80" height="180.99" fill="#24906f"/>
<rect x="1374.30" y="511.42" width="7.80" height="160.88" fill="#24906f"/>
<rect x="1382.10" y="518.12" width="7.80" height="154.18" fill="#24906f"/>
<rect x="1389.91" y="538.23" width="7.80" height="134.07" fill="#24906f"/>
<rect x="1397.71" y="531.53" width="7.80" height="140.77" fill="#24906f"/>
<rect x="1405.51" y="544.94" width="7.80" height="127.36" fill="#24906f"/>
<rect x="1413.32" y="471.20" width="7.80" height="201.10" fill="#24906f"/>
<rect x="1421.12" y="430.98" width="7.80" height="241.32" fill="#24906f"/>
<rect x="1428.92" y="498.01" width="7.80" height="174.29" fill="#24906f"/>
<rect x="1436.73" y="518.12" width="7.80" height="154.18" fill="#24906f"/>
<rect x="1444.53" y="498.01" width="7.80" height="174.29" fill="#24906f"/>
<rect x="1452.34" y="498.01" width="7.80" height="174.29" fill="#24906f"/>
<rect x="1460.14" y="538.23" width="7.80" height="134.07" fill="#24906f"/>
<rect x="1467.94" y="518.12" width="7.80" height="154.18" fill="#24906f"/>
<rect x="1475.75" y="538.23" width="7.80" height="134.07" fill="#24906f"/>
<rect x="1483.55" y="531.53" width="7.80" height="140.77" fill="#24906f"/>
<rect x="1491.36" y="477.90" width="7.80" height="194.40" fill="#24906f"/>
<rect x="1499.16" y="397.46" width="7.80" height="274.84" fill="#24906f"/>
<rect x="1506.96" y="404.17" width="7.80" height="268.13" fill="#24906f"/>
<rect x="1514.77" y="471.20" width="7.80" height="201.10" fill="#24906f"/>
<rect x="1522.57" y="491.31" width="7.80" height="180.99" fill="#24906f"/>
<rect x="1530.37" y="477.90" width="7.80" height="194.40" fill="#24906f"/>
<rect x="1538.18" y="477.90" width="7.80" height="194.40" fill="#24906f"/>
<rect x="1545.98" y="477.90" width="7.80" height="194.40" fill="#24906f"/>
<rect x="1553.79" y="544.94" width="7.80" height="127.36" fill="#24906f"/>
<rect x="1561.59" y="544.94" width="7.80" height="127.36" fill="#24906f"/>
<rect x="1569.39" y="551.64" width="7.80" height="120.66" fill="#24906f"/>
<rect x="1577.20" y="551.64" width="7.80" height="120.66" fill="#24906f"/>
<rect x="1585.00" y="538.23" width="7.80" height="134.07" fill="#24906f"/>
<rect x="1592.80" y="551.64" width="7.80" height="120.66" fill="#24906f"/>
<rect x="1600.61" y="544.94" width="7.80" height="127.36" fill="#24906f"/>
<rect x="1608.41" y="544.94" width="7.80" height="127.36" fill="#24906f"/>
<rect x="1616.22" y="558.34" width="7.80" height="113.96" fill="#24906f"/>
<rect x="1624.02" y="565.05" width="7.80" height="107.25" fill="#24906f"/>
<rect x="1631.82" y="558.34" width="7.80" height="113.96" fill="#24906f"/>
<rect x="1639.63" y="558.34" width="7.80" height="113.96" fill="#24906f"/>
<rect x="1647.43" y="565.05" width="7.80" height="107.25" fill="#24906f"/>
<rect x="1655.24" y="558.34" width="7.80" height="113.96" fill="#24906f"/>
<rect x="1663.04" y="551.64" width="7.80" height="120.66" fill="#24906f"/>
<rect x="1670.84" y="565.05" width="7.80" height="107.25" fill="#24906f"/>
<rect x="1678.65" y="558.34" width="7.80" height="113.96" fill="#24906f"/>
<rect x="1686.45" y="544.94" width="7.80" height="127.36" fill="#24906f"/>
<rect x="1694.25" y="558.34" width="7.80" height="113.96" fill="#24906f"/>
<rect x="1702.06" y="558.34" width="7.80" height="113.96" fill="#24906f"/>
<rect x="1709.86" y="558.34" width="7.80" height="113.96" fill="#24906f"/>
<rect x="1717.67" y="551.64" width="7.80" height="120.66" fill="#24906f"/>
<rect x="1725.47" y="551.64" width="7.80" height="120.66" fill="#24906f"/>
<rect x="1733.27" y="551.64" width="7.80" height="120.66" fill="#24906f"/>
<rect x="1741.08" y="558.34" width="7.80" height="113.96" fill="#a0edc3"/>
<rect x="1748.88" y="551.64" width="7.80" height="120.66" fill="#a0edc3"/>
<rect x="1756.68" y="551.64" width="7.80" height="120.66" fill="#a0edc3"/>
<rect x="1764.49" y="551.64" width="7.80" height="120.66" fill="#a0edc3"/>
<rect x="1772.29" y="551.64" width="7.80" height="120.66" fill="#a0edc3"/>
<rect x="1780.10" y="558.34" width="7.80" height="113.96" fill="#a0edc3"/>
<rect x="1787.90" y="544.94" width="7.80" height="127.36" fill="#a0edc3"/>
<rect x="1795.70" y="551.64" width="7.80" height="120.66" fill="#a0edc3"/>
<rect x="1803.51" y="551.64" width="7.80" height="120.66" fill="#a0edc3"/>
<rect x="1811.31" y="544.94" width="7.80" height="127.36" fill="#a0edc3"/>
<rect x="1819.12" y="531.53" width="7.80" height="140.77" fill="#a0edc3"/>
<rect x="1826.92" y="538.23" width="7.80" height="134.07" fill="#a0edc3"/>
<rect x="1834.72" y="544.94" width="7.80" height="127.36" fill="#a0edc3"/>
<rect x="1842.53" y="544.94" width="7.80" height="127.36" fill="#a0edc3"/>
<rect x="1850.33" y="538.23" width="7.80" height="134.07" fill="#a0edc3"/>
<rect x="1858.13" y="531.53" width="7.80" height="140.77" fill="#a0edc3"/>
<rect x="1865.94" y="538.23" width="7.80" height="134.07" fill="#a0edc3"/>
<rect x="1873.74" y="538.23" width="7.80" height="134.07" fill="#a0edc3"/>
<rect x="1881.55" y="544.94" width="7.80" height="127.36" fill="#a0edc3"/>
<rect x="1889.35" y="538.23" width="7.80" height="134.07" fill="#a0edc3"/>
<rect x="1897.15" y="538.23" width="7.80" height="134.07" fill="#a0edc3"/>
<rect x="1904.96" y="544.94" width="7.80" height="127.36" fill="#a0edc3"/>
<rect x="1912.76" y="538.23" width="7.80" height="134.07" fill="#a0edc3"/>
<rect x="1920.57" y="538.23" width="7.80" height="134.07" fill="#a0edc3"/>
<rect x="1928.37" y="538.23" width="7.80" height="134.07" fill="#a0edc3"/>
<rect x="1936.17" y="538.23" width="7.80" height="134.07" fill="#a0edc3"/>
<rect x="1943.98" y="538.23" width="7.80" height="134.07" fill="#a0edc3"/>
<rect x="1951.78" y="538.23" width="7.80" height="134.07" fill="#a0edc3"/>
<rect x="1959.58" y="538.23" width="7.80" height="134.07" fill="#a0edc3"/>
<rect x="1967.39" y="531.53" width="7.80" height="140.77" fill="#a0edc3"/>
<rect x="1975.19" y="538.23" width="7.80" height="134.07" fill="#a0edc3"/>
<rect x="1983.00" y="538.23" width="7.80" height="134.07" fill="#a0edc3"/>
<rect x="1990.80" y="538.23" width="7.80" height="134.07" fill="#a0edc3"/>
<rect x="1998.60" y="531.53" width="7.80" height="140.77" fill="#a0edc3"/>
<rect x="2006.41" y="538.23" width="7.80" height="134.07" fill="#a0edc3"/>
<rect x="2014.21" y="531.53" width="7.80" height="140.77" fill="#a0edc3"/>
<rect x="2022.01" y="538.23" width="7.80" height="134.07" fill="#a0edc3"/>
<rect x="2029.82" y="531.53" width="7.80" height="140.77" fill="#a0edc3"/>
<rect x="2037.62" y="538.23" width="7.80" height="134.07" fill="#a0edc3"/>
<rect x="2045.43" y="538.23" width="7.80" height="134.07" fill="#a0edc3"/>
<rect x="2053.23" y="531.53" width="7.80" height="140.77" fill="#a0edc3"/>
<rect x="2061.03" y="531.53" width="7.80" height="140.77" fill="#a0edc3"/>
<rect x="2068.84" y="538.23" width="7.80" height="134.07" fill="#a0edc3"/>
<rect x="2076.64" y="524.83" width="7.80" height="147.47" fill="#a0edc3"/>
<rect x="2084.45" y="531.53" width="7.80" height="140.77" fill="#a0edc3"/>
<rect x="2092.25" y="531.53" width="7.80" height="140.77" fill="#a0edc3"/>
<rect x="2100.05" y="538.23" width="7.80" height="134.07" fill="#a0edc3"/>
<rect x="2107.86" y="531.53" width="7.80" height="140.77" fill="#a0edc3"/>
<rect x="2115.66" y="571.75" width="7.80" height="100.55" fill="#a0edc3"/>
<rect x="2123.46" y="591.86" width="7.80" height="80.44" fill="#a0edc3"/>
<rect x="2131.27" y="591.86" width="7.80" height="80.44" fill="#a0edc3"/>
<rect x="2139.07" y="585.16" width="7.80" height="87.14" fill="#a0edc3"/>
<rect x="2146.88" y="585.16" width="7.80" height="87.14" fill="#a0edc3"/>
<rect x="2154.68" y="585.16" width="7.80" height="87.14" fill="#a0edc3"/>
<rect x="2162.48" y="591.86" width="7.80" height="80.44" fill="#a0edc3"/>
<rect x="2170.29" y="591.86" width="7.80" height="80.44" fill="#a0edc3"/>
<rect x="2178.09" y="585.16" width="7.80" height="87.14" fill="#a0edc3"/>
<rect x="2185.89" y="585.16" width="7.80" height="87.14" fill="#a0edc3"/>
<rect x="2193.70" y="591.86" width="7.80" height="80.44" fill="#a0edc3"/>
<rect x="2201.50" y="591.86" width="7.80" height="80.44" fill="#a0edc3"/>
<rect x="2209.31" y="585.16" width="7.80" height="87.14" fill="#a0edc3"/>
<rect x="2217.11" y="585.16" width="7.80" height="87.14" fill="#a0edc3"/>
<rect x="2224.91" y="585.16" width="7.80" height="87.14" fill="#a0edc3"/>
<rect x="2232.72" y="585.16" width="7.80" height="87.14" fill="#a0edc3"/>
<rect x="2240.52" y="578.45" width="7.80" height="93.85" fill="#a0edc3"/>
<rect x="2248.33" y="585.16" width="7.80" height="87.14" fill="#a0edc3"/>
<rect x="2256.13" y="585.16" width="7.80" height="87.14" fill="#a0edc3"/>
<rect x="2263.93" y="578.45" width="7.80" height="93.85" fill="#a0edc3"/>
<rect x="2271.74" y="578.45" width="7.80" height="93.85" fill="#a0edc3"/>
<rect x="2279.54" y="585.16" width="7.80" height="87.14" fill="#a0edc3"/>
<rect x="2287.34" y="571.75" width="7.80" height="100.55" fill="#a0edc3"/>
<rect x="2295.15" y="585.16" width="7.80" height="87.14" fill="#a0edc3"/>
<rect x="2302.95" y="571.75" width="7.80" height="100.55" fill="#a0edc3"/>
<rect x="2310.76" y="585.16" width="7.80" height="87.14" fill="#a0edc3"/>
<rect x="2318.56" y="578.45" width="7.80" height="93.85" fill="#a0edc3"/>
<rect x="2326.36" y="565.05" width="7.80" height="107.25" fill="#a0edc3"/>
<rect x="2334.17" y="578.45" width="7.80" height="93.85" fill="#a0edc3"/>
<rect x="2341.97" y="578.45" width="7.80" height="93.85" fill="#a0edc3"/>
<rect x="2349.78" y="578.45" width="7.80" height="93.85" fill="#a0edc3"/>
<rect x="2357.58" y="578.45" width="7.80" height="93.85" fill="#a0edc3"/>
<rect x="2365.38" y="578.45" width="7.80" height="93.85" fill="#a0edc3"/>
<rect x="2373.19" y="571.75" width="7.80" height="100.55" fill="#a0edc3"/>
<rect x="2380.99" y="571.75" width="7.80" height="100.55" fill="#a0edc3"/>
<path d="M156.90,565.05V672.3M164.71,565.05V672.3M172.51,571.75V672.3M180.31,565.05V672.3M188.12,565.05V672.3M195.92,565.05V672.3M203.72,571.75V672.3M211.53,571.75V672.3M219.33,571.75V672.3M227.14,571.75V672.3M234.94,571.75V672.3M242.74,565.05V672.3M250.55,565.05V672.3M258.35,571.75V672.3M266.16,565.05V672.3M273.96,565.05V672.3M281.76,565.05V672.3M289.57,565.05V672.3M297.37,565.05V672.3M305.17,565.05V672.3M312.98,565.05V672.3M320.78,565.05V672.3M328.59,565.05V672.3M336.39,565.05V672.3M344.19,565.05V672.3M352.00,565.05V672.3M359.80,565.05V672.3M367.61,565.05V672.3M375.41,565.05V672.3M383.21,565.05V672.3M391.02,565.05V672.3M398.82,565.05V672.3M406.62,571.75V672.3M414.43,565.05V672.3M422.23,565.05V672.3M430.04,565.05V672.3M437.84,565.05V672.3M445.64,571.75V672.3M453.45,571.75V672.3M461.25,565.05V672.3M469.05,565.05V672.3M476.86,571.75V672.3M484.66,551.64V672.3M492.47,551.64V672.3M500.27,558.34V672.3M508.07,565.05V672.3M515.88,565.05V672.3M523.68,565.05V672.3M531.49,565.05V672.3M539.29,565.05V672.3M547.09,565.05V672.3M554.90,565.05V672.3M562.70,565.05V672.3M570.50,565.05V672.3M578.31,558.34V672.3M586.11,558.34V672.3M593.92,558.34V672.3M601.72,565.05V672.3M609.52,565.05V672.3M617.33,518.12V672.3M625.13,498.01V672.3M632.93,498.01V672.3M640.74,498.01V672.3M648.54,498.01V672.3M656.35,504.72V672.3M664.15,504.72V672.3M671.95,498.01V672.3M679.76,498.01V672.3M687.56,498.01V672.3M695.37,498.01V672.3M703.17,498.01V672.3M710.97,498.01V672.3M718.78,498.01V672.3M726.58,504.72V672.3M734.38,504.72V672.3M742.19,504.72V672.3M749.99,498.01V672.3M757.80,498.01V672.3M765.60,504.72V672.3M773.40,504.72V672.3M781.21,504.72V672.3M789.01,504.72V672.3M796.82,504.72V672.3M804.62,504.72V672.3M812.42,504.72V672.3M820.23,504.72V672.3M828.03,498.01V672.3M835.83,417.57V672.3M843.64,417.57V672.3M851.44,216.47V672.3M859.25,142.74V672.3M867.05,142.74V672.3M874.85,162.85V672.3M882.66,136.03V672.3M890.46,136.03V672.3M898.26,209.77V672.3M906.07,216.47V672.3M913.87,149.44V672.3M921.68,149.44V672.3M929.48,203.07V672.3M937.28,296.91V672.3M945.09,377.35V672.3M952.89,343.84V672.3M960.70,343.84V672.3M968.50,196.36V672.3M976.30,162.85V672.3M984.11,122.63V672.3M991.91,122.63V672.3M999.71,249.99V672.3M1007.52,444.39V672.3M1015.32,444.39V672.3M1023.13,451.09V672.3M1030.93,451.09V672.3M1038.73,451.09V672.3M1046.54,491.31V672.3M1054.34,491.31V672.3M1062.14,498.01V672.3M1069.95,384.06V672.3M1077.75,283.51V672.3M1085.56,283.51V672.3M1093.36,343.84V672.3M1101.16,310.32V672.3M1108.97,276.80V672.3M1116.77,243.29V672.3M1124.58,243.29V672.3M1132.38,276.80V672.3M1140.18,363.95V672.3M1147.99,363.95V672.3M1155.79,430.98V672.3M1163.59,430.98V672.3M1171.40,363.95V672.3M1179.20,323.73V672.3M1187.01,323.73V672.3M1194.81,363.95V672.3M1202.61,350.54V672.3M1210.42,350.54V672.3M1218.22,390.76V672.3M1226.03,357.24V672.3M1233.83,357.24V672.3M1241.63,390.76V672.3M1249.44,430.98V672.3M1257.24,451.09V672.3M1265.04,451.09V672.3M1272.85,464.50V672.3M1280.65,477.90V672.3M1288.46,524.83V672.3M1296.26,524.83V672.3M1304.06,538.23V672.3M1311.87,538.23V672.3M1319.67,524.83V672.3M1327.47,524.83V672.3M1335.28,538.23V672.3M1343.08,484.61V672.3M1350.89,484.61V672.3M1358.69,498.01V672.3M1366.49,491.31V672.3M1374.30,491.31V672.3M1382.10,511.42V672.3M1389.91,518.12V672.3M1397.71,531.53V672.3M1405.51,531.53V672.3M1413.32,471.20V672.3M1421.12,430.98V672.3M1428.92,430.98V672.3M1436.73,498.01V672.3M1444.53,498.01V672.3M1452.34,498.01V672.3M1460.14,498.01V672.3M1467.94,518.12V672.3M1475.75,518.12V672.3M1483.55,531.53V672.3M1491.36,477.90V672.3M1499.16,397.46V672.3M1506.96,397.46V672.3M1514.77,404.17V672.3M1522.57,471.20V672.3M1530.37,477.90V672.3M1538.18,477.90V672.3M1545.98,477.90V672.3M1553.79,477.90V672.3M1561.59,544.94V672.3M1569.39,544.94V672.3M1577.20,551.64V672.3M1585.00,538.23V672.3M1592.80,538.23V672.3M1600.61,544.94V672.3M1608.41,544.94V672.3M1616.22,544.94V672.3M1624.02,558.34V672.3M1631.82,558.34V672.3M1639.63,558.34V672.3M1647.43,558.34V672.3M1655.24,558.34V672.3M1663.04,551.64V672.3M1670.84,551.64V672.3M1678.65,558.34V672.3M1686.45,544.94V672.3M1694.25,544.94V672.3M1702.06,558.34V672.3M1709.86,558.34V672.3M1717.67,551.64V672.3M1725.47,551.64V672.3M1733.27,551.64V672.3M1741.08,551.64V672.3M1748.88,551.64V672.3M1756.68,551.64V672.3M1764.49,551.64V672.3M1772.29,551.64V672.3M1780.10,551.64V672.3M1787.90,544.94V672.3M1795.70,544.94V672.3M1803.51,551.64V672.3M1811.31,544.94V672.3M1819.12,531.53V672.3M1826.92,531.53V672.3M1834.72,538.23V672.3M1842.53,544.94V672.3M1850.33,538.23V672.3M1858.13,531.53V672.3M1865.94,531.53V672.3M1873.74,538.23V672.3M1881.55,538.23V672.3M1889.35,538.23V672.3M1897.15,538.23V672.3M1904.96,538.23V672.3M1912.76,538.23V672.3M1920.57,538.23V672.3M1928.37,538.23V672.3M1936.17,538.23V672.3M1943.98,538.23V672.3M1951.78,538.23V672.3M1959.58,538.23V672.3M1967.39,531.53V672.3M1975.19,531.53V672.3M1983.00,538.23V672.3M1990.80,538.23V672.3M1998.60,531.53V672.3M2006.41,531.53V672.3M2014.21,531.53V672.3M2022.01,531.53V672.3M2029.82,531.53V672.3M2037.62,531.53V672.3M2045.43,538.23V672.3M2053.23,531.53V672.3M2061.03,531.53V672.3M2068.84,531.53V672.3M2076.64,524.83V672.3M2084.45,524.83V672.3M2092.25,531.53V672.3M2100.05,531.53V672.3M2107.86,531.53V672.3M2115.66,531.53V672.3M2123.46,571.75V672.3M2131.27,591.86V672.3M2139.07,585.16V672.3M2146.88,585.16V672.3M2154.68,585.16V672.3M2162.48,585.16V672.3M2170.29,591.86V672.3M2178.09,585.16V672.3M2185.89,585.16V672.3M2193.70,585.16V672.3M2201.50,591.86V672.3M2209.31,585.16V672.3M2217.11,585.16V672.3M2224.91,585.16V672.3M2232.72,585.16V672.3M2240.52,578.45V672.3M2248.33,578.45V672.3M2256.13,585.16V672.3M2263.93,578.45V672.3M2271.74,578.45V672.3M2279.54,578.45V672.3M2287.34,571.75V672.3M2295.15,571.75V672.3M2302.95,571.75V672.3M2310.76,571.75V672.3M2318.56,578.45V672.3M2326.36,565.05V672.3M2334.17,565.05V672.3M2341.97,578.45V672.3M2349.78,578.45V672.3M2357.58,578.45V672.3M2365.38,578.45V672.3M2373.19,571.75V672.3M2380.99,571.75V672.3M2388.79,571.75V672.3" stroke="#fff" stroke-opacity="0.4" stroke-width="1" fill="none"/>
<line x1="152.5" y1="69.0" x2="152.5" y2="673.3" stroke="#444" stroke-width="1.6"/>
<line x1="152.0" y1="673.0999999999999" x2="2400.5" y2="673.0999999999999" stroke="#6f6f6f" stroke-width="1"/>
<line x1="153.0" y1="672.0999999999999" x2="2400.5" y2="672.0999999999999" stroke="#c4c4c4" stroke-width="1"/>
<line x1="153.5" y1="673.3" x2="153.5" y2="683.3" stroke="#aaa" stroke-width="1.3"/>
<line x1="247.5" y1="673.3" x2="247.5" y2="683.3" stroke="#aaa" stroke-width="1.3"/>
<line x1="340.5" y1="673.3" x2="340.5" y2="683.3" stroke="#aaa" stroke-width="1.3"/>
<line x1="434.5" y1="673.3" x2="434.5" y2="683.3" stroke="#aaa" stroke-width="1.3"/>
<line x1="528.5" y1="673.3" x2="528.5" y2="683.3" stroke="#aaa" stroke-width="1.3"/>
<line x1="621.5" y1="673.3" x2="621.5" y2="683.3" stroke="#aaa" stroke-width="1.3"/>
<line x1="715.5" y1="673.3" x2="715.5" y2="683.3" stroke="#aaa" stroke-width="1.3"/>
<line x1="809.5" y1="673.3" x2="809.5" y2="683.3" stroke="#aaa" stroke-width="1.3"/>
<line x1="902.5" y1="673.3" x2="902.5" y2="683.3" stroke="#aaa" stroke-width="1.3"/>
<line x1="996.5" y1="673.3" x2="996.5" y2="683.3" stroke="#aaa" stroke-width="1.3"/>
<line x1="1089.5" y1="673.3" x2="1089.5" y2="683.3" stroke="#aaa" stroke-width="1.3"/>
<line x1="1183.5" y1="673.3" x2="1183.5" y2="683.3" stroke="#aaa" stroke-width="1.3"/>
<line x1="1277.5" y1="673.3" x2="1277.5" y2="683.3" stroke="#aaa" stroke-width="1.3"/>
<line x1="1370.5" y1="673.3" x2="1370.5" y2="683.3" stroke="#aaa" stroke-width="1.3"/>
<line x1="1464.5" y1="673.3" x2="1464.5" y2="683.3" stroke="#aaa" stroke-width="1.3"/>
<line x1="1558.5" y1="673.3" x2="1558.5" y2="683.3" stroke="#aaa" stroke-width="1.3"/>
<line x1="1651.5" y1="673.3" x2="1651.5" y2="683.3" stroke="#aaa" stroke-width="1.3"/>
<line x1="1745.5" y1="673.3" x2="1745.5" y2="683.3" stroke="#aaa" stroke-width="1.3"/>
<line x1="1839.5" y1="673.3" x2="1839.5" y2="683.3" stroke="#aaa" stroke-width="1.3"/>
<line x1="1932.5" y1="673.3" x2="1932.5" y2="683.3" stroke="#aaa" stroke-width="1.3"/>
<line x1="2026.5" y1="673.3" x2="2026.5" y2="683.3" stroke="#aaa" stroke-width="1.3"/>
<line x1="2120.5" y1="673.3" x2="2120.5" y2="683.3" stroke="#aaa" stroke-width="1.3"/>
<line x1="2213.5" y1="673.3" x2="2213.5" y2="683.3" stroke="#aaa" stroke-width="1.3"/>
<line x1="2307.5" y1="673.3" x2="2307.5" y2="683.3" stroke="#aaa" stroke-width="1.3"/>
<line x1="2400.5" y1="673.3" x2="2400.5" y2="683.3" stroke="#aaa" stroke-width="1.3"/>
<g style='font-family:"Liberation Sans", sans-serif'>
<text x="131.20" y="678.10" font-size="18.3" fill="#333" text-anchor="end" font-weight="normal" textLength="11.90" lengthAdjust="spacingAndGlyphs"  xml:space="preserve">0</text>
<text x="131.20" y="611.07" font-size="18.3" fill="#333" text-anchor="end" font-weight="normal" textLength="23.80" lengthAdjust="spacingAndGlyphs"  xml:space="preserve">10</text>
<text x="131.20" y="544.03" font-size="18.3" fill="#333" text-anchor="end" font-weight="normal" textLength="23.80" lengthAdjust="spacingAndGlyphs"  xml:space="preserve">20</text>
<text x="131.20" y="477.00" font-size="18.3" fill="#333" text-anchor="end" font-weight="normal" textLength="23.80" lengthAdjust="spacingAndGlyphs"  xml:space="preserve">30</text>
<text x="131.20" y="409.97" font-size="18.3" fill="#333" text-anchor="end" font-weight="normal" textLength="23.80" lengthAdjust="spacingAndGlyphs"  xml:space="preserve">40</text>
<text x="131.20" y="342.93" font-size="18.3" fill="#333" text-anchor="end" font-weight="normal" textLength="23.80" lengthAdjust="spacingAndGlyphs"  xml:space="preserve">50</text>
<text x="131.20" y="275.90" font-size="18.3" fill="#333" text-anchor="end" font-weight="normal" textLength="23.80" lengthAdjust="spacingAndGlyphs"  xml:space="preserve">60</text>
<text x="131.20" y="208.87" font-size="18.3" fill="#333" text-anchor="end" font-weight="normal" textLength="23.80" lengthAdjust="spacingAndGlyphs"  xml:space="preserve">70</text>
<text x="131.20" y="141.83" font-size="18.3" fill="#333" text-anchor="end" font-weight="normal" textLength="23.80" lengthAdjust="spacingAndGlyphs"  xml:space="preserve">80</text>
<text x="131.20" y="74.80" font-size="18.3" fill="#333" text-anchor="end" font-weight="normal" textLength="23.80" lengthAdjust="spacingAndGlyphs"  xml:space="preserve">90</text>
<text x="153.00" y="707.00" font-size="18.6" fill="#000" text-anchor="middle" font-weight="normal" textLength="24.80" lengthAdjust="spacingAndGlyphs" stroke="#000" stroke-width="0.45" xml:space="preserve">0h</text>
<text x="246.65" y="707.00" font-size="18.6" fill="#000" text-anchor="middle" font-weight="normal" textLength="24.80" lengthAdjust="spacingAndGlyphs" stroke="#000" stroke-width="0.45" xml:space="preserve">1h</text>
<text x="340.29" y="707.00" font-size="18.6" fill="#000" text-anchor="middle" font-weight="normal" textLength="24.80" lengthAdjust="spacingAndGlyphs" stroke="#000" stroke-width="0.45" xml:space="preserve">2h</text>
<text x="433.94" y="707.00" font-size="18.6" fill="#000" text-anchor="middle" font-weight="normal" textLength="24.80" lengthAdjust="spacingAndGlyphs" stroke="#000" stroke-width="0.45" xml:space="preserve">3h</text>
<text x="527.58" y="707.00" font-size="18.6" fill="#000" text-anchor="middle" font-weight="normal" textLength="24.80" lengthAdjust="spacingAndGlyphs" stroke="#000" stroke-width="0.45" xml:space="preserve">4h</text>
<text x="621.23" y="707.00" font-size="18.6" fill="#000" text-anchor="middle" font-weight="normal" textLength="24.80" lengthAdjust="spacingAndGlyphs" stroke="#000" stroke-width="0.45" xml:space="preserve">5h</text>
<text x="714.88" y="707.00" font-size="18.6" fill="#000" text-anchor="middle" font-weight="normal" textLength="24.80" lengthAdjust="spacingAndGlyphs" stroke="#000" stroke-width="0.45" xml:space="preserve">6h</text>
<text x="808.52" y="707.00" font-size="18.6" fill="#000" text-anchor="middle" font-weight="normal" textLength="24.80" lengthAdjust="spacingAndGlyphs" stroke="#000" stroke-width="0.45" xml:space="preserve">7h</text>
<text x="902.17" y="707.00" font-size="18.6" fill="#000" text-anchor="middle" font-weight="normal" textLength="24.80" lengthAdjust="spacingAndGlyphs" stroke="#000" stroke-width="0.45" xml:space="preserve">8h</text>
<text x="995.81" y="707.00" font-size="18.6" fill="#000" text-anchor="middle" font-weight="normal" textLength="24.80" lengthAdjust="spacingAndGlyphs" stroke="#000" stroke-width="0.45" xml:space="preserve">9h</text>
<text x="1089.46" y="707.00" font-size="18.6" fill="#000" text-anchor="middle" font-weight="normal" textLength="35.60" lengthAdjust="spacingAndGlyphs" stroke="#000" stroke-width="0.45" xml:space="preserve">10h</text>
<text x="1183.10" y="707.00" font-size="18.6" fill="#000" text-anchor="middle" font-weight="normal" textLength="35.60" lengthAdjust="spacingAndGlyphs" stroke="#000" stroke-width="0.45" xml:space="preserve">11h</text>
<text x="1276.75" y="707.00" font-size="18.6" fill="#000" text-anchor="middle" font-weight="normal" textLength="35.60" lengthAdjust="spacingAndGlyphs" stroke="#000" stroke-width="0.45" xml:space="preserve">12h</text>
<text x="1370.40" y="707.00" font-size="18.6" fill="#000" text-anchor="middle" font-weight="normal" textLength="35.60" lengthAdjust="spacingAndGlyphs" stroke="#000" stroke-width="0.45" xml:space="preserve">13h</text>
<text x="1464.04" y="707.00" font-size="18.6" fill="#000" text-anchor="middle" font-weight="normal" textLength="35.60" lengthAdjust="spacingAndGlyphs" stroke="#000" stroke-width="0.45" xml:space="preserve">14h</text>
<text x="1557.69" y="707.00" font-size="18.6" fill="#000" text-anchor="middle" font-weight="normal" textLength="35.60" lengthAdjust="spacingAndGlyphs" stroke="#000" stroke-width="0.45" xml:space="preserve">15h</text>
<text x="1651.33" y="707.00" font-size="18.6" fill="#000" text-anchor="middle" font-weight="normal" textLength="35.60" lengthAdjust="spacingAndGlyphs" stroke="#000" stroke-width="0.45" xml:space="preserve">16h</text>
<text x="1744.98" y="707.00" font-size="18.6" fill="#000" text-anchor="middle" font-weight="normal" textLength="35.60" lengthAdjust="spacingAndGlyphs" stroke="#000" stroke-width="0.45" xml:space="preserve">17h</text>
<text x="1838.62" y="707.00" font-size="18.6" fill="#000" text-anchor="middle" font-weight="normal" textLength="35.60" lengthAdjust="spacingAndGlyphs" stroke="#000" stroke-width="0.45" xml:space="preserve">18h</text>
<text x="1932.27" y="707.00" font-size="18.6" fill="#000" text-anchor="middle" font-weight="normal" textLength="35.60" lengthAdjust="spacingAndGlyphs" stroke="#000" stroke-width="0.45" xml:space="preserve">19h</text>
<text x="2025.92" y="707.00" font-size="18.6" fill="#000" text-anchor="middle" font-weight="normal" textLength="35.60" lengthAdjust="spacingAndGlyphs" stroke="#000" stroke-width="0.45" xml:space="preserve">20h</text>
<text x="2119.56" y="707.00" font-size="18.6" fill="#000" text-anchor="middle" font-weight="normal" textLength="35.60" lengthAdjust="spacingAndGlyphs" stroke="#000" stroke-width="0.45" xml:space="preserve">21h</text>
<text x="2213.21" y="707.00" font-size="18.6" fill="#000" text-anchor="middle" font-weight="normal" textLength="35.60" lengthAdjust="spacingAndGlyphs" stroke="#000" stroke-width="0.45" xml:space="preserve">22h</text>
<text x="2306.85" y="707.00" font-size="18.6" fill="#000" text-anchor="middle" font-weight="normal" textLength="35.60" lengthAdjust="spacingAndGlyphs" stroke="#000" stroke-width="0.45" xml:space="preserve">23h</text>
<text x="2400.50" y="707.00" font-size="18.6" fill="#000" text-anchor="middle" font-weight="normal" textLength="24.80" lengthAdjust="spacingAndGlyphs" stroke="#000" stroke-width="0.45" xml:space="preserve">0h</text>
</g>
<text transform="translate(86.3,370) rotate(-90)" font-size="24" fill="#333" text-anchor="middle" textLength="29.3" lengthAdjust="spacingAndGlyphs" style='font-family:"Liberation Sans", sans-serif'>kW</text>
<rect x="170.0" y="817.3" width="2247.7000000000003" height="505.0" fill="#000" opacity="0.45" filter="url(#sh)"/>
<rect x="168.0" y="815.3" width="2247.7000000000003" height="505.0" fill="#efefef"/>
<rect x="489.10" y="1151.97" width="321.10" height="84.17" fill="#fff"/>
<rect x="1131.30" y="1151.97" width="321.10" height="84.17" fill="#fff"/>
<rect x="1773.50" y="1151.97" width="321.10" height="84.17" fill="#fff"/>
<rect x="489.10" y="983.63" width="321.10" height="84.17" fill="#fff"/>
<rect x="1131.30" y="983.63" width="321.10" height="84.17" fill="#fff"/>
<rect x="1773.50" y="983.63" width="321.10" height="84.17" fill="#fff"/>
<rect x="489.10" y="815.30" width="321.10" height="84.17" fill="#fff"/>
<rect x="1131.30" y="815.30" width="321.10" height="84.17" fill="#fff"/>
<rect x="1773.50" y="815.30" width="321.10" height="84.17" fill="#fff"/>
<line x1="157.0" y1="1236.5" x2="2415.7000000000003" y2="1236.5" stroke="#c6c6c6" stroke-width="1"/>
<line x1="157.0" y1="1152.5" x2="2415.7000000000003" y2="1152.5" stroke="#c6c6c6" stroke-width="1"/>
<line x1="157.0" y1="1068.5" x2="2415.7000000000003" y2="1068.5" stroke="#c6c6c6" stroke-width="1"/>
<line x1="157.0" y1="984.5" x2="2415.7000000000003" y2="984.5" stroke="#c6c6c6" stroke-width="1"/>
<line x1="157.0" y1="899.5" x2="2415.7000000000003" y2="899.5" stroke="#c6c6c6" stroke-width="1"/>
<line x1="157.0" y1="815.5" x2="2415.7000000000003" y2="815.5" stroke="#c6c6c6" stroke-width="1"/>
<line x1="489.5" y1="1151.97" x2="489.5" y2="1236.13" stroke="#cacaca" stroke-width="1"/>
<line x1="810.5" y1="1151.97" x2="810.5" y2="1236.13" stroke="#cacaca" stroke-width="1"/>
<line x1="1131.5" y1="1151.97" x2="1131.5" y2="1236.13" stroke="#cacaca" stroke-width="1"/>
<line x1="1452.5" y1="1151.97" x2="1452.5" y2="1236.13" stroke="#cacaca" stroke-width="1"/>
<line x1="1774.5" y1="1151.97" x2="1774.5" y2="1236.13" stroke="#cacaca" stroke-width="1"/>
<line x1="2095.5" y1="1151.97" x2="2095.5" y2="1236.13" stroke="#cacaca" stroke-width="1"/>
<line x1="489.5" y1="983.63" x2="489.5" y2="1067.80" stroke="#cacaca" stroke-width="1"/>
<line x1="810.5" y1="983.63" x2="810.5" y2="1067.80" stroke="#cacaca" stroke-width="1"/>
<line x1="1131.5" y1="983.63" x2="1131.5" y2="1067.80" stroke="#cacaca" stroke-width="1"/>
<line x1="1452.5" y1="983.63" x2="1452.5" y2="1067.80" stroke="#cacaca" stroke-width="1"/>
<line x1="1774.5" y1="983.63" x2="1774.5" y2="1067.80" stroke="#cacaca" stroke-width="1"/>
<line x1="2095.5" y1="983.63" x2="2095.5" y2="1067.80" stroke="#cacaca" stroke-width="1"/>
<line x1="489.5" y1="815.30" x2="489.5" y2="899.47" stroke="#cacaca" stroke-width="1"/>
<line x1="810.5" y1="815.30" x2="810.5" y2="899.47" stroke="#cacaca" stroke-width="1"/>
<line x1="1131.5" y1="815.30" x2="1131.5" y2="899.47" stroke="#cacaca" stroke-width="1"/>
<line x1="1452.5" y1="815.30" x2="1452.5" y2="899.47" stroke="#cacaca" stroke-width="1"/>
<line x1="1774.5" y1="815.30" x2="1774.5" y2="899.47" stroke="#cacaca" stroke-width="1"/>
<line x1="2095.5" y1="815.30" x2="2095.5" y2="899.47" stroke="#cacaca" stroke-width="1"/>
<line x1="157.0" y1="1320.5" x2="168.0" y2="1320.5" stroke="#a0a0a0" stroke-width="1"/>
<path d="M168.00,1320.3L168.00,1252.97L169.11,1252.97L169.11,1248.76L170.23,1248.76L170.23,1252.97L171.34,1252.97L171.34,1252.97L172.46,1252.97L172.46,1252.97L173.57,1252.97L173.57,1248.76L174.69,1248.76L174.69,1252.97L175.80,1252.97L175.80,1248.76L176.92,1248.76L176.92,1248.76L178.03,1248.76L178.03,1252.97L179.15,1252.97L179.15,1252.97L180.26,1252.97L180.26,1248.76L181.38,1248.76L181.38,1252.97L182.49,1252.97L182.49,1252.97L183.61,1252.97L183.61,1257.17L184.72,1257.17L184.72,1248.76L185.84,1248.76L185.84,1257.17L186.95,1257.17L186.95,1248.76L188.07,1248.76L188.07,1252.97L189.18,1252.97L189.18,1248.76L190.30,1248.76L190.30,1252.97L191.41,1252.97L191.41,1248.76L192.53,1248.76L192.53,1248.76L193.64,1248.76L193.64,1248.76L194.76,1248.76L194.76,1248.76L195.87,1248.76L195.87,1257.17L196.99,1257.17L196.99,1257.17L198.10,1257.17L198.10,1252.97L199.22,1252.97L199.22,1248.76L200.33,1248.76L200.33,1252.97L201.45,1252.97L201.45,1252.97L202.56,1252.97L202.56,1252.97L203.68,1252.97L203.68,1248.76L204.79,1248.76L204.79,1248.76L205.91,1248.76L205.91,1248.76L207.02,1248.76L207.02,1252.97L208.14,1252.97L208.14,1248.76L209.25,1248.76L209.25,1248.76L210.37,1248.76L210.37,1244.55L211.48,1244.55L211.48,1248.76L212.60,1248.76L212.60,1248.76L213.71,1248.76L213.71,1248.76L214.83,1248.76L214.83,1248.76L215.94,1248.76L215.94,1244.55L217.06,1244.55L217.06,1248.76L218.17,1248.76L218.17,1244.55L219.29,1244.55L219.29,1248.76L220.40,1248.76L220.40,1248.76L221.52,1248.76L221.52,1244.55L222.63,1244.55L222.63,1248.76L223.75,1248.76L223.75,1244.55L224.86,1244.55L224.86,1248.76L225.98,1248.76L225.98,1240.34L227.09,1240.34L227.09,1240.34L228.21,1240.34L228.21,1248.76L229.32,1248.76L229.32,1240.34L230.44,1240.34L230.44,1236.13L231.55,1236.13L231.55,1240.34L232.67,1240.34L232.67,1240.34L233.78,1240.34L233.78,1236.13L234.90,1236.13L234.90,1240.34L236.01,1240.34L236.01,1236.13L237.13,1236.13L237.13,1240.34L238.24,1240.34L238.24,1236.13L239.36,1236.13L239.36,1244.55L240.47,1244.55L240.47,1244.55L241.59,1244.55L241.59,1240.34L242.70,1240.34L242.70,1240.34L243.82,1240.34L243.82,1240.34L244.93,1240.34L244.93,1240.34L246.05,1240.34L246.05,1240.34L247.16,1240.34L247.16,1240.34L248.28,1240.34L248.28,1231.92L249.39,1231.92L249.39,1231.92L250.50,1231.92L250.50,1236.13L251.62,1236.13L251.62,1240.34L252.73,1240.34L252.73,1236.13L253.85,1236.13L253.85,1240.34L254.96,1240.34L254.96,1236.13L256.08,1236.13L256.08,1240.34L257.19,1240.34L257.19,1240.34L258.31,1240.34L258.31,1240.34L259.42,1240.34L259.42,1236.13L260.54,1236.13L260.54,1236.13L261.65,1236.13L261.65,1240.34L262.77,1240.34L262.77,1236.13L263.88,1236.13L263.88,1236.13L265.00,1236.13L265.00,1231.92L266.11,1231.92L266.11,1231.92L267.23,1231.92L267.23,1231.92L268.34,1231.92L268.34,1236.13L269.46,1236.13L269.46,1236.13L270.57,1236.13L270.57,1236.13L271.69,1236.13L271.69,1236.13L272.80,1236.13L272.80,1240.34L273.92,1240.34L273.92,1240.34L275.03,1240.34L275.03,1236.13L276.15,1236.13L276.15,1240.34L277.26,1240.34L277.26,1236.13L278.38,1236.13L278.38,1240.34L279.49,1240.34L279.49,1244.55L280.61,1244.55L280.61,1236.13L281.72,1236.13L281.72,1236.13L282.84,1236.13L282.84,1240.34L283.95,1240.34L283.95,1236.13L285.07,1236.13L285.07,1236.13L286.18,1236.13L286.18,1236.13L287.30,1236.13L287.30,1236.13L288.41,1236.13L288.41,1244.55L289.53,1244.55L289.53,1244.55L290.64,1244.55L290.64,1244.55L291.76,1244.55L291.76,1244.55L292.87,1244.55L292.87,1244.55L293.99,1244.55L293.99,1244.55L295.10,1244.55L295.10,1240.34L296.22,1240.34L296.22,1244.55L297.33,1244.55L297.33,1244.55L298.45,1244.55L298.45,1244.55L299.56,1244.55L299.56,1244.55L300.68,1244.55L300.68,1244.55L301.79,1244.55L301.79,1244.55L302.91,1244.55L302.91,1244.55L304.02,1244.55L304.02,1244.55L305.14,1244.55L305.14,1248.76L306.25,1248.76L306.25,1248.76L307.37,1248.76L307.37,1248.76L308.48,1248.76L308.48,1248.76L309.60,1248.76L309.60,1244.55L310.71,1244.55L310.71,1248.76L311.83,1248.76L311.83,1240.34L312.94,1240.34L312.94,1240.34L314.06,1240.34L314.06,1240.34L315.17,1240.34L315.17,1252.97L316.29,1252.97L316.29,1248.76L317.40,1248.76L317.40,1248.76L318.52,1248.76L318.52,1252.97L319.63,1252.97L319.63,1248.76L320.75,1248.76L320.75,1252.97L321.86,1252.97L321.86,1252.97L322.98,1252.97L322.98,1248.76L324.09,1248.76L324.09,1248.76L325.21,1248.76L325.21,1252.97L326.32,1252.97L326.32,1252.97L327.44,1252.97L327.44,1252.97L328.55,1252.97L328.55,1252.97L329.66,1252.97L329.66,1248.76L330.78,1248.76L330.78,1252.97L331.89,1252.97L331.89,1257.17L333.01,1257.17L333.01,1252.97L334.12,1252.97L334.12,1257.17L335.24,1257.17L335.24,1261.38L336.35,1261.38L336.35,1252.97L337.47,1252.97L337.47,1257.17L338.58,1257.17L338.58,1257.17L339.70,1257.17L339.70,1257.17L340.81,1257.17L340.81,1257.17L341.93,1257.17L341.93,1261.38L343.04,1261.38L343.04,1265.59L344.16,1265.59L344.16,1261.38L345.27,1261.38L345.27,1261.38L346.39,1261.38L346.39,1257.17L347.50,1257.17L347.50,1261.38L348.62,1261.38L348.62,1261.38L349.73,1261.38L349.73,1257.17L350.85,1257.17L350.85,1261.38L351.96,1261.38L351.96,1257.17L353.08,1257.17L353.08,1265.59L354.19,1265.59L354.19,1265.59L355.31,1265.59L355.31,1265.59L356.42,1265.59L356.42,1261.38L357.54,1261.38L357.54,1261.38L358.65,1261.38L358.65,1265.59L359.77,1265.59L359.77,1265.59L360.88,1265.59L360.88,1265.59L362.00,1265.59L362.00,1265.59L363.11,1265.59L363.11,1261.38L364.23,1261.38L364.23,1261.38L365.34,1261.38L365.34,1261.38L366.46,1261.38L366.46,1265.59L367.57,1265.59L367.57,1265.59L368.69,1265.59L368.69,1265.59L369.80,1265.59L369.80,1269.80L370.92,1269.80L370.92,1265.59L372.03,1265.59L372.03,1274.01L373.15,1274.01L373.15,1269.80L374.26,1269.80L374.26,1274.01L375.38,1274.01L375.38,1274.01L376.49,1274.01L376.49,1274.01L377.61,1274.01L377.61,1274.01L378.72,1274.01L378.72,1274.01L379.84,1274.01L379.84,1274.01L380.95,1274.01L380.95,1269.80L382.07,1269.80L382.07,1269.80L383.18,1269.80L383.18,1269.80L384.30,1269.80L384.30,1269.80L385.41,1269.80L385.41,1265.59L386.53,1265.59L386.53,1269.80L387.64,1269.80L387.64,1265.59L388.76,1265.59L388.76,1269.80L389.87,1269.80L389.87,1269.80L390.99,1269.80L390.99,1269.80L392.10,1269.80L392.10,1265.59L393.22,1265.59L393.22,1265.59L394.33,1265.59L394.33,1261.38L395.45,1261.38L395.45,1265.59L396.56,1265.59L396.56,1261.38L397.68,1261.38L397.68,1265.59L398.79,1265.59L398.79,1265.59L399.91,1265.59L399.91,1261.38L401.02,1261.38L401.02,1265.59L402.14,1265.59L402.14,1261.38L403.25,1261.38L403.25,1261.38L404.37,1261.38L404.37,1269.80L405.48,1269.80L405.48,1261.38L406.60,1261.38L406.60,1261.38L407.71,1261.38L407.71,1269.80L408.82,1269.80L408.82,1265.59L409.94,1265.59L409.94,1257.17L411.05,1257.17L411.05,1257.17L412.17,1257.17L412.17,1261.38L413.28,1261.38L413.28,1257.17L414.40,1257.17L414.40,1257.17L415.51,1257.17L415.51,1257.17L416.63,1257.17L416.63,1261.38L417.74,1261.38L417.74,1257.17L418.86,1257.17L418.86,1261.38L419.97,1261.38L419.97,1257.17L421.09,1257.17L421.09,1265.59L422.20,1265.59L422.20,1261.38L423.32,1261.38L423.32,1261.38L424.43,1261.38L424.43,1261.38L425.55,1261.38L425.55,1257.17L426.66,1257.17L426.66,1261.38L427.78,1261.38L427.78,1257.17L428.89,1257.17L428.89,1252.97L430.01,1252.97L430.01,1257.17L431.12,1257.17L431.12,1257.17L432.24,1257.17L432.24,1252.97L433.35,1252.97L433.35,1252.97L434.47,1252.97L434.47,1257.17L435.58,1257.17L435.58,1257.17L436.70,1257.17L436.70,1257.17L437.81,1257.17L437.81,1252.97L438.93,1252.97L438.93,1252.97L440.04,1252.97L440.04,1252.97L441.16,1252.97L441.16,1261.38L442.27,1261.38L442.27,1252.97L443.39,1252.97L443.39,1252.97L444.50,1252.97L444.50,1257.17L445.62,1257.17L445.62,1257.17L446.73,1257.17L446.73,1257.17L447.85,1257.17L447.85,1257.17L448.96,1257.17L448.96,1257.17L450.08,1257.17L450.08,1257.17L451.19,1257.17L451.19,1252.97L452.31,1252.97L452.31,1252.97L453.42,1252.97L453.42,1257.17L454.54,1257.17L454.54,1257.17L455.65,1257.17L455.65,1248.76L456.77,1248.76L456.77,1248.76L457.88,1248.76L457.88,1252.97L459.00,1252.97L459.00,1248.76L460.11,1248.76L460.11,1248.76L461.23,1248.76L461.23,1248.76L462.34,1248.76L462.34,1248.76L463.46,1248.76L463.46,1252.97L464.57,1252.97L464.57,1248.76L465.69,1248.76L465.69,1252.97L466.80,1252.97L466.80,1257.17L467.92,1257.17L467.92,1248.76L469.03,1248.76L469.03,1252.97L470.15,1252.97L470.15,1252.97L471.26,1252.97L471.26,1252.97L472.38,1252.97L472.38,1252.97L473.49,1252.97L473.49,1252.97L474.61,1252.97L474.61,1252.97L475.72,1252.97L475.72,1248.76L476.84,1248.76L476.84,1252.97L477.95,1252.97L477.95,1252.97L479.07,1252.97L479.07,1252.97L480.18,1252.97L480.18,1248.76L481.30,1248.76L481.30,1252.97L482.41,1252.97L482.41,1248.76L483.53,1248.76L483.53,1248.76L484.64,1248.76L484.64,1248.76L485.76,1248.76L485.76,1252.97L486.87,1252.97L486.87,1248.76L487.99,1248.76L487.99,1248.76L489.10,1248.76L489.10,1252.97L490.21,1252.97L490.21,1248.76L491.33,1248.76L491.33,1252.97L492.44,1252.97L492.44,1248.76L493.56,1248.76L493.56,1252.97L494.67,1252.97L494.67,1252.97L495.79,1252.97L495.79,1252.97L496.90,1252.97L496.90,1248.76L498.02,1248.76L498.02,1248.76L499.13,1248.76L499.13,1252.97L500.25,1252.97L500.25,1248.76L501.36,1248.76L501.36,1248.76L502.48,1248.76L502.48,1248.76L503.59,1248.76L503.59,1248.76L504.71,1248.76L504.71,1252.97L505.82,1252.97L505.82,1248.76L506.94,1248.76L506.94,1252.97L508.05,1252.97L508.05,1252.97L509.17,1252.97L509.17,1252.97L510.28,1252.97L510.28,1252.97L511.40,1252.97L511.40,1257.17L512.51,1257.17L512.51,1252.97L513.63,1252.97L513.63,1252.97L514.74,1252.97L514.74,1252.97L515.86,1252.97L515.86,1257.17L516.97,1257.17L516.97,1248.76L518.09,1248.76L518.09,1248.76L519.20,1248.76L519.20,1244.55L520.32,1244.55L520.32,1248.76L521.43,1248.76L521.43,1248.76L522.55,1248.76L522.55,1248.76L523.66,1248.76L523.66,1248.76L524.78,1248.76L524.78,1244.55L525.89,1244.55L525.89,1248.76L527.01,1248.76L527.01,1248.76L528.12,1248.76L528.12,1248.76L529.24,1248.76L529.24,1244.55L530.35,1244.55L530.35,1248.76L531.47,1248.76L531.47,1248.76L532.58,1248.76L532.58,1248.76L533.70,1248.76L533.70,1244.55L534.81,1244.55L534.81,1248.76L535.93,1248.76L535.93,1248.76L537.04,1248.76L537.04,1244.55L538.16,1244.55L538.16,1244.55L539.27,1244.55L539.27,1244.55L540.39,1244.55L540.39,1248.76L541.50,1248.76L541.50,1248.76L542.62,1248.76L542.62,1248.76L543.73,1248.76L543.73,1248.76L544.85,1248.76L544.85,1248.76L545.96,1248.76L545.96,1240.34L547.08,1240.34L547.08,1240.34L548.19,1240.34L548.19,1240.34L549.31,1240.34L549.31,1240.34L550.42,1240.34L550.42,1244.55L551.54,1244.55L551.54,1244.55L552.65,1244.55L552.65,1244.55L553.77,1244.55L553.77,1244.55L554.88,1244.55L554.88,1248.76L556.00,1248.76L556.00,1244.55L557.11,1244.55L557.11,1248.76L558.23,1248.76L558.23,1248.76L559.34,1248.76L559.34,1248.76L560.46,1248.76L560.46,1248.76L561.57,1248.76L561.57,1244.55L562.69,1244.55L562.69,1244.55L563.80,1244.55L563.80,1244.55L564.92,1244.55L564.92,1248.76L566.03,1248.76L566.03,1244.55L567.15,1244.55L567.15,1252.97L568.26,1252.97L568.26,1244.55L569.38,1244.55L569.38,1248.76L570.49,1248.76L570.49,1244.55L571.60,1244.55L571.60,1248.76L572.72,1248.76L572.72,1248.76L573.83,1248.76L573.83,1248.76L574.95,1248.76L574.95,1244.55L576.06,1244.55L576.06,1244.55L577.18,1244.55L577.18,1244.55L578.29,1244.55L578.29,1244.55L579.41,1244.55L579.41,1248.76L580.52,1248.76L580.52,1248.76L581.64,1248.76L581.64,1248.76L582.75,1248.76L582.75,1248.76L583.87,1248.76L583.87,1244.55L584.98,1244.55L584.98,1244.55L586.10,1244.55L586.10,1248.76L587.21,1248.76L587.21,1244.55L588.33,1244.55L588.33,1244.55L589.44,1244.55L589.44,1248.76L590.56,1248.76L590.56,1248.76L591.67,1248.76L591.67,1248.76L592.79,1248.76L592.79,1248.76L593.90,1248.76L593.90,1252.97L595.02,1252.97L595.02,1244.55L596.13,1244.55L596.13,1244.55L597.25,1244.55L597.25,1244.55L598.36,1244.55L598.36,1244.55L599.48,1244.55L599.48,1244.55L600.59,1244.55L600.59,1248.76L601.71,1248.76L601.71,1240.34L602.82,1240.34L602.82,1240.34L603.94,1240.34L603.94,1240.34L605.05,1240.34L605.05,1240.34L606.17,1240.34L606.17,1252.97L607.28,1252.97L607.28,1248.76L608.40,1248.76L608.40,1248.76L609.51,1248.76L609.51,1248.76L610.63,1248.76L610.63,1252.97L611.74,1252.97L611.74,1252.97L612.86,1252.97L612.86,1248.76L613.97,1248.76L613.97,1252.97L615.09,1252.97L615.09,1252.97L616.20,1252.97L616.20,1252.97L617.32,1252.97L617.32,1248.76L618.43,1248.76L618.43,1257.17L619.55,1257.17L619.55,1252.97L620.66,1252.97L620.66,1248.76L621.78,1248.76L621.78,1248.76L622.89,1248.76L622.89,1248.76L624.01,1248.76L624.01,1252.97L625.12,1252.97L625.12,1248.76L626.24,1248.76L626.24,1257.17L627.35,1257.17L627.35,1252.97L628.47,1252.97L628.47,1248.76L629.58,1248.76L629.58,1248.76L630.70,1248.76L630.70,1248.76L631.81,1248.76L631.81,1248.76L632.93,1248.76L632.93,1248.76L634.04,1248.76L634.04,1244.55L635.16,1244.55L635.16,1248.76L636.27,1248.76L636.27,1248.76L637.39,1248.76L637.39,1252.97L638.50,1252.97L638.50,1248.76L639.62,1248.76L639.62,1248.76L640.73,1248.76L640.73,1252.97L641.85,1252.97L641.85,1257.17L642.96,1257.17L642.96,1252.97L644.08,1252.97L644.08,1252.97L645.19,1252.97L645.19,1257.17L646.31,1257.17L646.31,1257.17L647.42,1257.17L647.42,1257.17L648.54,1257.17L648.54,1252.97L649.65,1252.97L649.65,1252.97L650.76,1252.97L650.76,1252.97L651.88,1252.97L651.88,1261.38L652.99,1261.38L652.99,1252.97L654.11,1252.97L654.11,1257.17L655.22,1257.17L655.22,1252.97L656.34,1252.97L656.34,1252.97L657.45,1252.97L657.45,1252.97L658.57,1252.97L658.57,1248.76L659.68,1248.76L659.68,1248.76L660.80,1248.76L660.80,1248.76L661.91,1248.76L661.91,1248.76L663.03,1248.76L663.03,1248.76L664.14,1248.76L664.14,1248.76L665.26,1248.76L665.26,1244.55L666.37,1244.55L666.37,1252.97L667.49,1252.97L667.49,1248.76L668.60,1248.76L668.60,1244.55L669.72,1244.55L669.72,1248.76L670.83,1248.76L670.83,1252.97L671.95,1252.97L671.95,1252.97L673.06,1252.97L673.06,1252.97L674.18,1252.97L674.18,1252.97L675.29,1252.97L675.29,1252.97L676.41,1252.97L676.41,1261.38L677.52,1261.38L677.52,1257.17L678.64,1257.17L678.64,1257.17L679.75,1257.17L679.75,1257.17L680.87,1257.17L680.87,1257.17L681.98,1257.17L681.98,1257.17L683.10,1257.17L683.10,1257.17L684.21,1257.17L684.21,1257.17L685.33,1257.17L685.33,1261.38L686.44,1261.38L686.44,1261.38L687.56,1261.38L687.56,1261.38L688.67,1261.38L688.67,1257.17L689.79,1257.17L689.79,1261.38L690.90,1261.38L690.90,1261.38L692.02,1261.38L692.02,1261.38L693.13,1261.38L693.13,1261.38L694.25,1261.38L694.25,1261.38L695.36,1261.38L695.36,1261.38L696.48,1261.38L696.48,1257.17L697.59,1257.17L697.59,1261.38L698.71,1261.38L698.71,1261.38L699.82,1261.38L699.82,1257.17L700.94,1257.17L700.94,1261.38L702.05,1261.38L702.05,1261.38L703.17,1261.38L703.17,1261.38L704.28,1261.38L704.28,1261.38L705.40,1261.38L705.40,1261.38L706.51,1261.38L706.51,1257.17L707.63,1257.17L707.63,1261.38L708.74,1261.38L708.74,1261.38L709.86,1261.38L709.86,1261.38L710.97,1261.38L710.97,1261.38L712.09,1261.38L712.09,1261.38L713.20,1261.38L713.20,1257.17L714.32,1257.17L714.32,1252.97L715.43,1252.97L715.43,1257.17L716.55,1257.17L716.55,1257.17L717.66,1257.17L717.66,1257.17L718.78,1257.17L718.78,1257.17L719.89,1257.17L719.89,1252.97L721.01,1252.97L721.01,1252.97L722.12,1252.97L722.12,1257.17L723.24,1257.17L723.24,1257.17L724.35,1257.17L724.35,1252.97L725.47,1252.97L725.47,1252.97L726.58,1252.97L726.58,1257.17L727.70,1257.17L727.70,1257.17L728.81,1257.17L728.81,1248.76L729.92,1248.76L729.92,1248.76L731.04,1248.76L731.04,1248.76L732.15,1248.76L732.15,1248.76L733.27,1248.76L733.27,1244.55L734.38,1244.55L734.38,1248.76L735.50,1248.76L735.50,1248.76L736.61,1248.76L736.61,1248.76L737.73,1248.76L737.73,1244.55L738.84,1244.55L738.84,1248.76L739.96,1248.76L739.96,1244.55L741.07,1244.55L741.07,1248.76L742.19,1248.76L742.19,1244.55L743.30,1244.55L743.30,1244.55L744.42,1244.55L744.42,1244.55L745.53,1244.55L745.53,1244.55L746.65,1244.55L746.65,1244.55L747.76,1244.55L747.76,1248.76L748.88,1248.76L748.88,1248.76L749.99,1248.76L749.99,1248.76L751.11,1248.76L751.11,1248.76L752.22,1248.76L752.22,1244.55L753.34,1244.55L753.34,1244.55L754.45,1244.55L754.45,1248.76L755.57,1248.76L755.57,1244.55L756.68,1244.55L756.68,1248.76L757.80,1248.76L757.80,1244.55L758.91,1244.55L758.91,1244.55L760.03,1244.55L760.03,1244.55L761.14,1244.55L761.14,1252.97L762.26,1252.97L762.26,1244.55L763.37,1244.55L763.37,1248.76L764.49,1248.76L764.49,1244.55L765.60,1244.55L765.60,1248.76L766.72,1248.76L766.72,1244.55L767.83,1244.55L767.83,1244.55L768.95,1244.55L768.95,1244.55L770.06,1244.55L770.06,1244.55L771.18,1244.55L771.18,1244.55L772.29,1244.55L772.29,1248.76L773.41,1248.76L773.41,1248.76L774.52,1248.76L774.52,1244.55L775.64,1244.55L775.64,1244.55L776.75,1244.55L776.75,1231.92L777.87,1231.92L777.87,1231.92L778.98,1231.92L778.98,1240.34L780.10,1240.34L780.10,1240.34L781.21,1240.34L781.21,1244.55L782.33,1244.55L782.33,1248.76L783.44,1248.76L783.44,1244.55L784.56,1244.55L784.56,1248.76L785.67,1248.76L785.67,1248.76L786.79,1248.76L786.79,1248.76L787.90,1248.76L787.90,1248.76L789.02,1248.76L789.02,1244.55L790.13,1244.55L790.13,1248.76L791.25,1248.76L791.25,1244.55L792.36,1244.55L792.36,1248.76L793.48,1248.76L793.48,1248.76L794.59,1248.76L794.59,1248.76L795.71,1248.76L795.71,1248.76L796.82,1248.76L796.82,1244.55L797.94,1244.55L797.94,1248.76L799.05,1248.76L799.05,1248.76L800.17,1248.76L800.17,1248.76L801.28,1248.76L801.28,1248.76L802.40,1248.76L802.40,1248.76L803.51,1248.76L803.51,1248.76L804.63,1248.76L804.63,1248.76L805.74,1248.76L805.74,1244.55L806.86,1244.55L806.86,1244.55L807.97,1244.55L807.97,1244.55L809.09,1244.55L809.09,1244.55L810.20,1244.55L810.20,1252.97L811.31,1252.97L811.31,1248.76L812.43,1248.76L812.43,1244.55L813.54,1244.55L813.54,1248.76L814.66,1248.76L814.66,1248.76L815.77,1248.76L815.77,1252.97L816.89,1252.97L816.89,1248.76L818.00,1248.76L818.00,1248.76L819.12,1248.76L819.12,1248.76L820.23,1248.76L820.23,1248.76L821.35,1248.76L821.35,1244.55L822.46,1244.55L822.46,1248.76L823.58,1248.76L823.58,1248.76L824.69,1248.76L824.69,1248.76L825.81,1248.76L825.81,1248.76L826.92,1248.76L826.92,1244.55L828.04,1244.55L828.04,1244.55L829.15,1244.55L829.15,1248.76L830.27,1248.76L830.27,1248.76L831.38,1248.76L831.38,1248.76L832.50,1248.76L832.50,1252.97L833.61,1252.97L833.61,1248.76L834.73,1248.76L834.73,1248.76L835.84,1248.76L835.84,1248.76L836.96,1248.76L836.96,1248.76L838.07,1248.76L838.07,1248.76L839.19,1248.76L839.19,1244.55L840.30,1244.55L840.30,1248.76L841.42,1248.76L841.42,1248.76L842.53,1248.76L842.53,1252.97L843.65,1252.97L843.65,1248.76L844.76,1248.76L844.76,1244.55L845.88,1244.55L845.88,1244.55L846.99,1244.55L846.99,1244.55L848.11,1244.55L848.11,1240.34L849.22,1240.34L849.22,1244.55L850.34,1244.55L850.34,1244.55L851.45,1244.55L851.45,1244.55L852.57,1244.55L852.57,1244.55L853.68,1244.55L853.68,1240.34L854.80,1240.34L854.80,1240.34L855.91,1240.34L855.91,1244.55L857.03,1244.55L857.03,1244.55L858.14,1244.55L858.14,1244.55L859.26,1244.55L859.26,1240.34L860.37,1240.34L860.37,1244.55L861.49,1244.55L861.49,1240.34L862.60,1240.34L862.60,1240.34L863.72,1240.34L863.72,1240.34L864.83,1240.34L864.83,1240.34L865.95,1240.34L865.95,1240.34L867.06,1240.34L867.06,1240.34L868.18,1240.34L868.18,1236.13L869.29,1236.13L869.29,1240.34L870.41,1240.34L870.41,1244.55L871.52,1244.55L871.52,1240.34L872.64,1240.34L872.64,1240.34L873.75,1240.34L873.75,1240.34L874.87,1240.34L874.87,1240.34L875.98,1240.34L875.98,1240.34L877.10,1240.34L877.10,1202.47L878.21,1202.47L878.21,1202.47L879.33,1202.47L879.33,1206.67L880.44,1206.67L880.44,1202.47L881.56,1202.47L881.56,1198.26L882.67,1198.26L882.67,1202.47L883.79,1202.47L883.79,1202.47L884.90,1202.47L884.90,1202.47L886.02,1202.47L886.02,1202.47L887.13,1202.47L887.13,1202.47L888.25,1202.47L888.25,1202.47L889.36,1202.47L889.36,1206.67L890.48,1206.67L890.48,1320.3Z" fill="#a0edc3"/>
<path d="M890.48,1320.3L890.48,1198.26L891.59,1198.26L891.59,1198.26L892.70,1198.26L892.70,1194.05L893.82,1194.05L893.82,1198.26L894.93,1198.26L894.93,1202.47L896.05,1202.47L896.05,1206.67L897.16,1206.67L897.16,1202.47L898.28,1202.47L898.28,1202.47L899.39,1202.47L899.39,1202.47L900.51,1202.47L900.51,1198.26L901.62,1198.26L901.62,1202.47L902.74,1202.47L902.74,1198.26L903.85,1198.26L903.85,1202.47L904.97,1202.47L904.97,1198.26L906.08,1198.26L906.08,1143.55L907.20,1143.55L907.20,1101.47L908.31,1101.47L908.31,1130.92L909.43,1130.92L909.43,1168.80L910.54,1168.80L910.54,1151.97L911.66,1151.97L911.66,1173.01L912.77,1173.01L912.77,1130.92L913.89,1130.92L913.89,1118.30L915.00,1118.30L915.00,1004.67L916.12,1004.67L916.12,1084.63L917.23,1084.63L917.23,1059.38L918.35,1059.38L918.35,992.05L919.46,992.05L919.46,1050.97L920.58,1050.97L920.58,987.84L921.69,987.84L921.69,1004.67L922.81,1004.67L922.81,1013.09L923.92,1013.09L923.92,1046.76L925.04,1046.76L925.04,1067.80L926.15,1067.80L926.15,1147.76L927.27,1147.76L927.27,1156.17L928.38,1156.17L928.38,1143.55L929.50,1143.55L929.50,1118.30L930.61,1118.30L930.61,1156.17L931.73,1156.17L931.73,1139.34L932.84,1139.34L932.84,1164.59L933.96,1164.59L933.96,1160.38L935.07,1160.38L935.07,1130.92L936.19,1130.92L936.19,1097.26L937.30,1097.26L937.30,1105.67L938.42,1105.67L938.42,1109.88L939.53,1109.88L939.53,1135.13L940.65,1135.13L940.65,1084.63L941.76,1084.63L941.76,1072.01L942.88,1072.01L942.88,1017.30L943.99,1017.30L943.99,971.01L945.11,971.01L945.11,983.63L946.22,983.63L946.22,848.97L947.34,848.97L947.34,1072.01L948.45,1072.01L948.45,1093.05L949.57,1093.05L949.57,1126.72L950.68,1126.72L950.68,1151.97L951.80,1151.97L951.80,1151.97L952.91,1151.97L952.91,1101.47L954.03,1101.47L954.03,1050.97L955.14,1050.97L955.14,1063.59L956.26,1063.59L956.26,1063.59L957.37,1063.59L957.37,1139.34L958.49,1139.34L958.49,1168.80L959.60,1168.80L959.60,1185.63L960.72,1185.63L960.72,1151.97L961.83,1151.97L961.83,1101.47L962.95,1101.47L962.95,1034.13L964.06,1034.13L964.06,1076.22L965.18,1076.22L965.18,1105.67L966.29,1105.67L966.29,1118.30L967.41,1118.30L967.41,1139.34L968.52,1139.34L968.52,1160.38L969.64,1160.38L969.64,1168.80L970.75,1168.80L970.75,1173.01L971.86,1173.01L971.86,1181.42L972.98,1181.42L972.98,1181.42L974.09,1181.42L974.09,1181.42L975.21,1181.42L975.21,1210.88L976.32,1210.88L976.32,1206.67L977.44,1206.67L977.44,1210.88L978.55,1210.88L978.55,1206.67L979.67,1206.67L979.67,1215.09L980.78,1215.09L980.78,1210.88L981.90,1210.88L981.90,1210.88L983.01,1210.88L983.01,1210.88L984.13,1210.88L984.13,1210.88L985.24,1210.88L985.24,1122.51L986.36,1122.51L986.36,1004.67L987.47,1004.67L987.47,979.42L988.59,979.42L988.59,1008.88L989.70,1008.88L989.70,1004.67L990.82,1004.67L990.82,1088.84L991.93,1088.84L991.93,1109.88L993.05,1109.88L993.05,1038.34L994.16,1038.34L994.16,1151.97L995.28,1151.97L995.28,1143.55L996.39,1143.55L996.39,1135.13L997.51,1135.13L997.51,1156.17L998.62,1156.17L998.62,1139.34L999.74,1139.34L999.74,1118.30L1000.85,1118.30L1000.85,1118.30L1001.97,1118.30L1001.97,1109.88L1003.08,1109.88L1003.08,1093.05L1004.20,1093.05L1004.20,1008.88L1005.31,1008.88L1005.31,1135.13L1006.43,1135.13L1006.43,1135.13L1007.54,1135.13L1007.54,1189.84L1008.66,1189.84L1008.66,1168.80L1009.77,1168.80L1009.77,1147.76L1010.89,1147.76L1010.89,1067.80L1012.00,1067.80L1012.00,1059.38L1013.12,1059.38L1013.12,1042.55L1014.23,1042.55L1014.23,1109.88L1015.35,1109.88L1015.35,1151.97L1016.46,1151.97L1016.46,1181.42L1017.58,1181.42L1017.58,1189.84L1018.69,1189.84L1018.69,1160.38L1019.81,1160.38L1019.81,1130.92L1020.92,1130.92L1020.92,1097.26L1022.04,1097.26L1022.04,1013.09L1023.15,1013.09L1023.15,983.63L1024.27,983.63L1024.27,1076.22L1025.38,1076.22L1025.38,1135.13L1026.50,1135.13L1026.50,1143.55L1027.61,1143.55L1027.61,1151.97L1028.73,1151.97L1028.73,1160.38L1029.84,1160.38L1029.84,1151.97L1030.96,1151.97L1030.96,1151.97L1032.07,1151.97L1032.07,1126.72L1033.19,1126.72L1033.19,1130.92L1034.30,1130.92L1034.30,1168.80L1035.42,1168.80L1035.42,1173.01L1036.53,1173.01L1036.53,1177.22L1037.65,1177.22L1037.65,1320.3Z" fill="#24906f"/>
<path d="M1037.65,1320.3L1037.65,1194.05L1038.76,1194.05L1038.76,1198.26L1039.88,1198.26L1039.88,1206.67L1040.99,1206.67L1040.99,1219.30L1042.11,1219.30L1042.11,1219.30L1043.22,1219.30L1043.22,1223.51L1044.34,1223.51L1044.34,1227.72L1045.45,1227.72L1045.45,1223.51L1046.57,1223.51L1046.57,1219.30L1047.68,1219.30L1047.68,1219.30L1048.80,1219.30L1048.80,1219.30L1049.91,1219.30L1049.91,1223.51L1051.03,1223.51L1051.03,1223.51L1052.14,1223.51L1052.14,1223.51L1053.25,1223.51L1053.25,1223.51L1054.37,1223.51L1054.37,1219.30L1055.48,1219.30L1055.48,1219.30L1056.60,1219.30L1056.60,1219.30L1057.71,1219.30L1057.71,1219.30L1058.83,1219.30L1058.83,1219.30L1059.94,1219.30L1059.94,1219.30L1061.06,1219.30L1061.06,1210.88L1062.17,1210.88L1062.17,1215.09L1063.29,1215.09L1063.29,1215.09L1064.40,1215.09L1064.40,1210.88L1065.52,1210.88L1065.52,1219.30L1066.63,1219.30L1066.63,1219.30L1067.75,1219.30L1067.75,1210.88L1068.86,1210.88L1068.86,1210.88L1069.98,1210.88L1069.98,1210.88L1071.09,1210.88L1071.09,1210.88L1072.21,1210.88L1072.21,1210.88L1073.32,1210.88L1073.32,1210.88L1074.44,1210.88L1074.44,1210.88L1075.55,1210.88L1075.55,1206.67L1076.67,1206.67L1076.67,1210.88L1077.78,1210.88L1077.78,1210.88L1078.90,1210.88L1078.90,1210.88L1080.01,1210.88L1080.01,1210.88L1081.13,1210.88L1081.13,1210.88L1082.24,1210.88L1082.24,1210.88L1083.36,1210.88L1083.36,1206.67L1084.47,1206.67L1084.47,1206.67L1085.59,1206.67L1085.59,1206.67L1086.70,1206.67L1086.70,1202.47L1087.82,1202.47L1087.82,1202.47L1088.93,1202.47L1088.93,1206.67L1090.05,1206.67L1090.05,1206.67L1091.16,1206.67L1091.16,1244.55L1092.28,1244.55L1092.28,1240.34L1093.39,1240.34L1093.39,1240.34L1094.51,1240.34L1094.51,1236.13L1095.62,1236.13L1095.62,1240.34L1096.74,1240.34L1096.74,1244.55L1097.85,1244.55L1097.85,1240.34L1098.97,1240.34L1098.97,1240.34L1100.08,1240.34L1100.08,1236.13L1101.20,1236.13L1101.20,1240.34L1102.31,1240.34L1102.31,1240.34L1103.43,1240.34L1103.43,1244.55L1104.54,1244.55L1104.54,1240.34L1105.66,1240.34L1105.66,1244.55L1106.77,1244.55L1106.77,1240.34L1107.89,1240.34L1107.89,1240.34L1109.00,1240.34L1109.00,1240.34L1110.12,1240.34L1110.12,1240.34L1111.23,1240.34L1111.23,1236.13L1112.35,1236.13L1112.35,1240.34L1113.46,1240.34L1113.46,1244.55L1114.58,1244.55L1114.58,1244.55L1115.69,1244.55L1115.69,1244.55L1116.81,1244.55L1116.81,1236.13L1117.92,1236.13L1117.92,1244.55L1119.04,1244.55L1119.04,1240.34L1120.15,1240.34L1120.15,1236.13L1121.27,1236.13L1121.27,1244.55L1122.38,1244.55L1122.38,1244.55L1123.50,1244.55L1123.50,1244.55L1124.61,1244.55L1124.61,1240.34L1125.73,1240.34L1125.73,1240.34L1126.84,1240.34L1126.84,1244.55L1127.96,1244.55L1127.96,1240.34L1129.07,1240.34L1129.07,1244.55L1130.19,1244.55L1130.19,1240.34L1131.30,1240.34L1131.30,1244.55L1132.41,1244.55L1132.41,1244.55L1133.53,1244.55L1133.53,1240.34L1134.64,1240.34L1134.64,1244.55L1135.76,1244.55L1135.76,1240.34L1136.87,1240.34L1136.87,1244.55L1137.99,1244.55L1137.99,1240.34L1139.10,1240.34L1139.10,1244.55L1140.22,1244.55L1140.22,1240.34L1141.33,1240.34L1141.33,1244.55L1142.45,1244.55L1142.45,1244.55L1143.56,1244.55L1143.56,1248.76L1144.68,1248.76L1144.68,1244.55L1145.79,1244.55L1145.79,1244.55L1146.91,1244.55L1146.91,1240.34L1148.02,1240.34L1148.02,1244.55L1149.14,1244.55L1149.14,1240.34L1150.25,1240.34L1150.25,1244.55L1151.37,1244.55L1151.37,1248.76L1152.48,1248.76L1152.48,1244.55L1153.60,1244.55L1153.60,1244.55L1154.71,1244.55L1154.71,1244.55L1155.83,1244.55L1155.83,1240.34L1156.94,1240.34L1156.94,1244.55L1158.06,1244.55L1158.06,1240.34L1159.17,1240.34L1159.17,1240.34L1160.29,1240.34L1160.29,1240.34L1161.40,1240.34L1161.40,1244.55L1162.52,1244.55L1162.52,1240.34L1163.63,1240.34L1163.63,1240.34L1164.75,1240.34L1164.75,1240.34L1165.86,1240.34L1165.86,1240.34L1166.98,1240.34L1166.98,1240.34L1168.09,1240.34L1168.09,1240.34L1169.21,1240.34L1169.21,1240.34L1170.32,1240.34L1170.32,1236.13L1171.44,1236.13L1171.44,1236.13L1172.55,1236.13L1172.55,1240.34L1173.67,1240.34L1173.67,1240.34L1174.78,1240.34L1174.78,1236.13L1175.90,1236.13L1175.90,1240.34L1177.01,1240.34L1177.01,1236.13L1178.13,1236.13L1178.13,1240.34L1179.24,1240.34L1179.24,1236.13L1180.36,1236.13L1180.36,1240.34L1181.47,1240.34L1181.47,1240.34L1182.59,1240.34L1182.59,1240.34L1183.70,1240.34L1183.70,1236.13L1184.82,1236.13L1184.82,1236.13L1185.93,1236.13L1185.93,1236.13L1187.05,1236.13L1187.05,1240.34L1188.16,1240.34L1188.16,1236.13L1189.28,1236.13L1189.28,1236.13L1190.39,1236.13L1190.39,1236.13L1191.51,1236.13L1191.51,1240.34L1192.62,1240.34L1192.62,1236.13L1193.74,1236.13L1193.74,1236.13L1194.85,1236.13L1194.85,1240.34L1195.97,1240.34L1195.97,1236.13L1197.08,1236.13L1197.08,1236.13L1198.20,1236.13L1198.20,1202.47L1199.31,1202.47L1199.31,1202.47L1200.43,1202.47L1200.43,1206.67L1201.54,1206.67L1201.54,1206.67L1202.66,1206.67L1202.66,1202.47L1203.77,1202.47L1203.77,1202.47L1204.89,1202.47L1204.89,1206.67L1206.00,1206.67L1206.00,1202.47L1207.12,1202.47L1207.12,1206.67L1208.23,1206.67L1208.23,1198.26L1209.35,1198.26L1209.35,1206.67L1210.46,1206.67L1210.46,1206.67L1211.58,1206.67L1211.58,1320.3Z" fill="#a0edc3"/>
<path d="M1211.58,1320.3L1211.58,1202.47L1212.69,1202.47L1212.69,1206.67L1213.80,1206.67L1213.80,1206.67L1214.92,1206.67L1214.92,1202.47L1216.03,1202.47L1216.03,1202.47L1217.15,1202.47L1217.15,1206.67L1218.26,1206.67L1218.26,1206.67L1219.38,1206.67L1219.38,1202.47L1220.49,1202.47L1220.49,1206.67L1221.61,1206.67L1221.61,1206.67L1222.72,1206.67L1222.72,1202.47L1223.84,1202.47L1223.84,1206.67L1224.95,1206.67L1224.95,1202.47L1226.07,1202.47L1226.07,1206.67L1227.18,1206.67L1227.18,1202.47L1228.30,1202.47L1228.30,1194.05L1229.41,1194.05L1229.41,1198.26L1230.53,1198.26L1230.53,1189.84L1231.64,1189.84L1231.64,1194.05L1232.76,1194.05L1232.76,1194.05L1233.87,1194.05L1233.87,1194.05L1234.99,1194.05L1234.99,1198.26L1236.10,1198.26L1236.10,1198.26L1237.22,1198.26L1237.22,1198.26L1238.33,1198.26L1238.33,1194.05L1239.45,1194.05L1239.45,1198.26L1240.56,1198.26L1240.56,1194.05L1241.68,1194.05L1241.68,1189.84L1242.79,1189.84L1242.79,1194.05L1243.91,1194.05L1243.91,1194.05L1245.02,1194.05L1245.02,1046.76L1246.14,1046.76L1246.14,1101.47L1247.25,1101.47L1247.25,1118.30L1248.37,1118.30L1248.37,1168.80L1249.48,1168.80L1249.48,1173.01L1250.60,1173.01L1250.60,1173.01L1251.71,1173.01L1251.71,1181.42L1252.83,1181.42L1252.83,1185.63L1253.94,1185.63L1253.94,1181.42L1255.06,1181.42L1255.06,1181.42L1256.17,1181.42L1256.17,1177.22L1257.29,1177.22L1257.29,1168.80L1258.40,1168.80L1258.40,1130.92L1259.52,1130.92L1259.52,1076.22L1260.63,1076.22L1260.63,1013.09L1261.75,1013.09L1261.75,1059.38L1262.86,1059.38L1262.86,1025.72L1263.98,1025.72L1263.98,1093.05L1265.09,1093.05L1265.09,1076.22L1266.21,1076.22L1266.21,958.38L1267.32,958.38L1267.32,1067.80L1268.44,1067.80L1268.44,1088.84L1269.55,1088.84L1269.55,1046.76L1270.67,1046.76L1270.67,1004.67L1271.78,1004.67L1271.78,1101.47L1272.90,1101.47L1272.90,1088.84L1274.01,1088.84L1274.01,1050.97L1275.13,1050.97L1275.13,1084.63L1276.24,1084.63L1276.24,979.42L1277.36,979.42L1277.36,1055.17L1278.47,1055.17L1278.47,1114.09L1279.59,1114.09L1279.59,1151.97L1280.70,1151.97L1280.70,1109.88L1281.82,1109.88L1281.82,1147.76L1282.93,1147.76L1282.93,1151.97L1284.05,1151.97L1284.05,1173.01L1285.16,1173.01L1285.16,1173.01L1286.28,1173.01L1286.28,1173.01L1287.39,1173.01L1287.39,1181.42L1288.51,1181.42L1288.51,1181.42L1289.62,1181.42L1289.62,1181.42L1290.74,1181.42L1290.74,1181.42L1291.85,1181.42L1291.85,1177.22L1292.96,1177.22L1292.96,1177.22L1294.08,1177.22L1294.08,1189.84L1295.19,1189.84L1295.19,1206.67L1296.31,1206.67L1296.31,1206.67L1297.42,1206.67L1297.42,1202.47L1298.54,1202.47L1298.54,1210.88L1299.65,1210.88L1299.65,1206.67L1300.77,1206.67L1300.77,1210.88L1301.88,1210.88L1301.88,1202.47L1303.00,1202.47L1303.00,1210.88L1304.11,1210.88L1304.11,1206.67L1305.23,1206.67L1305.23,1160.38L1306.34,1160.38L1306.34,1097.26L1307.46,1097.26L1307.46,1017.30L1308.57,1017.30L1308.57,1076.22L1309.69,1076.22L1309.69,1088.84L1310.80,1088.84L1310.80,1076.22L1311.92,1076.22L1311.92,983.63L1313.03,983.63L1313.03,1046.76L1314.15,1046.76L1314.15,979.42L1315.26,979.42L1315.26,1114.09L1316.38,1114.09L1316.38,1109.88L1317.49,1109.88L1317.49,1088.84L1318.61,1088.84L1318.61,1042.55L1319.72,1042.55L1319.72,1093.05L1320.84,1093.05L1320.84,1130.92L1321.95,1130.92L1321.95,1130.92L1323.07,1130.92L1323.07,1059.38L1324.18,1059.38L1324.18,1135.13L1325.30,1135.13L1325.30,1173.01L1326.41,1173.01L1326.41,1160.38L1327.53,1160.38L1327.53,1105.67L1328.64,1105.67L1328.64,1130.92L1329.76,1130.92L1329.76,1151.97L1330.87,1151.97L1330.87,1126.72L1331.99,1126.72L1331.99,1093.05L1333.10,1093.05L1333.10,1050.97L1334.22,1050.97L1334.22,1109.88L1335.33,1109.88L1335.33,1109.88L1336.45,1109.88L1336.45,1067.80L1337.56,1067.80L1337.56,1034.13L1338.68,1034.13L1338.68,1000.47L1339.79,1000.47L1339.79,1088.84L1340.91,1088.84L1340.91,1067.80L1342.02,1067.80L1342.02,1013.09L1343.14,1013.09L1343.14,1130.92L1344.25,1130.92L1344.25,1122.51L1345.37,1122.51L1345.37,1097.26L1346.48,1097.26L1346.48,1114.09L1347.60,1114.09L1347.60,1147.76L1348.71,1147.76L1348.71,1160.38L1349.83,1160.38L1349.83,1177.22L1350.94,1177.22L1350.94,1168.80L1352.06,1168.80L1352.06,1177.22L1353.17,1177.22L1353.17,1181.42L1354.29,1181.42L1354.29,1189.84L1355.40,1189.84L1355.40,1181.42L1356.52,1181.42L1356.52,1189.84L1357.63,1189.84L1357.63,1189.84L1358.75,1189.84L1358.75,1320.3Z" fill="#24906f"/>
<path d="M1358.75,1320.3L1358.75,1168.80L1359.86,1168.80L1359.86,1168.80L1360.98,1168.80L1360.98,1189.84L1362.09,1189.84L1362.09,1194.05L1363.21,1194.05L1363.21,1198.26L1364.32,1198.26L1364.32,1202.47L1365.44,1202.47L1365.44,1219.30L1366.55,1219.30L1366.55,1219.30L1367.67,1219.30L1367.67,1215.09L1368.78,1215.09L1368.78,1215.09L1369.90,1215.09L1369.90,1215.09L1371.01,1215.09L1371.01,1219.30L1372.12,1219.30L1372.12,1215.09L1373.24,1215.09L1373.24,1219.30L1374.35,1219.30L1374.35,1215.09L1375.47,1215.09L1375.47,1215.09L1376.58,1215.09L1376.58,1215.09L1377.70,1215.09L1377.70,1219.30L1378.81,1219.30L1378.81,1215.09L1379.93,1215.09L1379.93,1215.09L1381.04,1215.09L1381.04,1219.30L1382.16,1219.30L1382.16,1219.30L1383.27,1219.30L1383.27,1215.09L1384.39,1215.09L1384.39,1215.09L1385.50,1215.09L1385.50,1219.30L1386.62,1219.30L1386.62,1223.51L1387.73,1223.51L1387.73,1219.30L1388.85,1219.30L1388.85,1219.30L1389.96,1219.30L1389.96,1219.30L1391.08,1219.30L1391.08,1215.09L1392.19,1215.09L1392.19,1219.30L1393.31,1219.30L1393.31,1219.30L1394.42,1219.30L1394.42,1215.09L1395.54,1215.09L1395.54,1219.30L1396.65,1219.30L1396.65,1219.30L1397.77,1219.30L1397.77,1219.30L1398.88,1219.30L1398.88,1215.09L1400.00,1215.09L1400.00,1215.09L1401.11,1215.09L1401.11,1215.09L1402.23,1215.09L1402.23,1219.30L1403.34,1219.30L1403.34,1219.30L1404.46,1219.30L1404.46,1215.09L1405.57,1215.09L1405.57,1215.09L1406.69,1215.09L1406.69,1215.09L1407.80,1215.09L1407.80,1219.30L1408.92,1219.30L1408.92,1223.51L1410.03,1223.51L1410.03,1219.30L1411.15,1219.30L1411.15,1223.51L1412.26,1223.51L1412.26,1215.09L1413.38,1215.09L1413.38,1257.17L1414.49,1257.17L1414.49,1257.17L1415.61,1257.17L1415.61,1257.17L1416.72,1257.17L1416.72,1252.97L1417.84,1252.97L1417.84,1257.17L1418.95,1257.17L1418.95,1261.38L1420.07,1261.38L1420.07,1257.17L1421.18,1257.17L1421.18,1257.17L1422.30,1257.17L1422.30,1252.97L1423.41,1252.97L1423.41,1257.17L1424.53,1257.17L1424.53,1257.17L1425.64,1257.17L1425.64,1252.97L1426.76,1252.97L1426.76,1252.97L1427.87,1252.97L1427.87,1252.97L1428.99,1252.97L1428.99,1257.17L1430.10,1257.17L1430.10,1252.97L1431.22,1252.97L1431.22,1252.97L1432.33,1252.97L1432.33,1252.97L1433.45,1252.97L1433.45,1252.97L1434.56,1252.97L1434.56,1257.17L1435.68,1257.17L1435.68,1252.97L1436.79,1252.97L1436.79,1252.97L1437.91,1252.97L1437.91,1257.17L1439.02,1257.17L1439.02,1257.17L1440.14,1257.17L1440.14,1257.17L1441.25,1257.17L1441.25,1257.17L1442.37,1257.17L1442.37,1252.97L1443.48,1252.97L1443.48,1252.97L1444.60,1252.97L1444.60,1252.97L1445.71,1252.97L1445.71,1257.17L1446.83,1257.17L1446.83,1257.17L1447.94,1257.17L1447.94,1257.17L1449.06,1257.17L1449.06,1252.97L1450.17,1252.97L1450.17,1252.97L1451.29,1252.97L1451.29,1252.97L1452.40,1252.97L1452.40,1257.17L1453.51,1257.17L1453.51,1252.97L1454.63,1252.97L1454.63,1248.76L1455.74,1248.76L1455.74,1252.97L1456.86,1252.97L1456.86,1248.76L1457.97,1248.76L1457.97,1252.97L1459.09,1252.97L1459.09,1252.97L1460.20,1252.97L1460.20,1257.17L1461.32,1257.17L1461.32,1248.76L1462.43,1248.76L1462.43,1252.97L1463.55,1252.97L1463.55,1248.76L1464.66,1248.76L1464.66,1252.97L1465.78,1252.97L1465.78,1252.97L1466.89,1252.97L1466.89,1252.97L1468.01,1252.97L1468.01,1252.97L1469.12,1252.97L1469.12,1252.97L1470.24,1252.97L1470.24,1252.97L1471.35,1252.97L1471.35,1248.76L1472.47,1248.76L1472.47,1252.97L1473.58,1252.97L1473.58,1248.76L1474.70,1248.76L1474.70,1252.97L1475.81,1252.97L1475.81,1244.55L1476.93,1244.55L1476.93,1244.55L1478.04,1244.55L1478.04,1244.55L1479.16,1244.55L1479.16,1248.76L1480.27,1248.76L1480.27,1248.76L1481.39,1248.76L1481.39,1248.76L1482.50,1248.76L1482.50,1244.55L1483.62,1244.55L1483.62,1244.55L1484.73,1244.55L1484.73,1240.34L1485.85,1240.34L1485.85,1244.55L1486.96,1244.55L1486.96,1244.55L1488.08,1244.55L1488.08,1240.34L1489.19,1240.34L1489.19,1248.76L1490.31,1248.76L1490.31,1244.55L1491.42,1244.55L1491.42,1244.55L1492.54,1244.55L1492.54,1244.55L1493.65,1244.55L1493.65,1240.34L1494.77,1240.34L1494.77,1244.55L1495.88,1244.55L1495.88,1244.55L1497.00,1244.55L1497.00,1244.55L1498.11,1244.55L1498.11,1244.55L1499.23,1244.55L1499.23,1240.34L1500.34,1240.34L1500.34,1240.34L1501.46,1240.34L1501.46,1244.55L1502.57,1244.55L1502.57,1244.55L1503.69,1244.55L1503.69,1244.55L1504.80,1244.55L1504.80,1244.55L1505.92,1244.55L1505.92,1244.55L1507.03,1244.55L1507.03,1244.55L1508.15,1244.55L1508.15,1244.55L1509.26,1244.55L1509.26,1240.34L1510.38,1240.34L1510.38,1244.55L1511.49,1244.55L1511.49,1244.55L1512.61,1244.55L1512.61,1244.55L1513.72,1244.55L1513.72,1244.55L1514.84,1244.55L1514.84,1244.55L1515.95,1244.55L1515.95,1244.55L1517.07,1244.55L1517.07,1244.55L1518.18,1244.55L1518.18,1219.30L1519.30,1219.30L1519.30,1219.30L1520.41,1219.30L1520.41,1219.30L1521.53,1219.30L1521.53,1202.47L1522.64,1202.47L1522.64,1202.47L1523.76,1202.47L1523.76,1206.67L1524.87,1206.67L1524.87,1210.88L1525.99,1210.88L1525.99,1202.47L1527.10,1202.47L1527.10,1206.67L1528.22,1206.67L1528.22,1206.67L1529.33,1206.67L1529.33,1206.67L1530.45,1206.67L1530.45,1206.67L1531.56,1206.67L1531.56,1206.67L1532.67,1206.67L1532.67,1320.3Z" fill="#a0edc3"/>
<path d="M1532.67,1320.3L1532.67,1206.67L1533.79,1206.67L1533.79,1206.67L1534.90,1206.67L1534.90,1206.67L1536.02,1206.67L1536.02,1206.67L1537.13,1206.67L1537.13,1206.67L1538.25,1206.67L1538.25,1206.67L1539.36,1206.67L1539.36,1210.88L1540.48,1210.88L1540.48,1206.67L1541.59,1206.67L1541.59,1210.88L1542.71,1210.88L1542.71,1206.67L1543.82,1206.67L1543.82,1210.88L1544.94,1210.88L1544.94,1202.47L1546.05,1202.47L1546.05,1202.47L1547.17,1202.47L1547.17,1202.47L1548.28,1202.47L1548.28,1206.67L1549.40,1206.67L1549.40,1185.63L1550.51,1185.63L1550.51,1173.01L1551.63,1173.01L1551.63,1177.22L1552.74,1177.22L1552.74,1164.59L1553.86,1164.59L1553.86,1093.05L1554.97,1093.05L1554.97,1029.92L1556.09,1029.92L1556.09,983.63L1557.20,983.63L1557.20,941.55L1558.32,941.55L1558.32,1034.13L1559.43,1034.13L1559.43,966.80L1560.55,966.80L1560.55,1000.47L1561.66,1000.47L1561.66,1072.01L1562.78,1072.01L1562.78,1067.80L1563.89,1067.80L1563.89,1072.01L1565.01,1072.01L1565.01,1017.30L1566.12,1017.30L1566.12,1055.17L1567.24,1055.17L1567.24,1130.92L1568.35,1130.92L1568.35,1114.09L1569.47,1114.09L1569.47,1135.13L1570.58,1135.13L1570.58,1130.92L1571.70,1130.92L1571.70,1130.92L1572.81,1130.92L1572.81,1118.30L1573.93,1118.30L1573.93,1097.26L1575.04,1097.26L1575.04,1067.80L1576.16,1067.80L1576.16,1088.84L1577.27,1088.84L1577.27,1034.13L1578.39,1034.13L1578.39,1084.63L1579.50,1084.63L1579.50,1038.34L1580.62,1038.34L1580.62,1038.34L1581.73,1038.34L1581.73,1013.09L1582.85,1013.09L1582.85,941.55L1583.96,941.55L1583.96,1059.38L1585.08,1059.38L1585.08,1080.42L1586.19,1080.42L1586.19,1067.80L1587.31,1067.80L1587.31,1072.01L1588.42,1072.01L1588.42,1017.30L1589.54,1017.30L1589.54,916.30L1590.65,916.30L1590.65,1080.42L1591.77,1080.42L1591.77,1135.13L1592.88,1135.13L1592.88,1130.92L1594.00,1130.92L1594.00,1097.26L1595.11,1097.26L1595.11,1017.30L1596.23,1017.30L1596.23,1059.38L1597.34,1059.38L1597.34,1126.72L1598.46,1126.72L1598.46,1130.92L1599.57,1130.92L1599.57,1147.76L1600.69,1147.76L1600.69,1126.72L1601.80,1126.72L1601.80,1072.01L1602.92,1072.01L1602.92,1135.13L1604.03,1135.13L1604.03,1109.88L1605.15,1109.88L1605.15,1143.55L1606.26,1143.55L1606.26,1147.76L1607.38,1147.76L1607.38,1126.72L1608.49,1126.72L1608.49,1164.59L1609.61,1164.59L1609.61,1160.38L1610.72,1160.38L1610.72,1173.01L1611.84,1173.01L1611.84,1181.42L1612.95,1181.42L1612.95,1189.84L1614.06,1189.84L1614.06,1189.84L1615.18,1189.84L1615.18,1194.05L1616.29,1194.05L1616.29,1219.30L1617.41,1219.30L1617.41,1227.72L1618.52,1227.72L1618.52,1227.72L1619.64,1227.72L1619.64,1223.51L1620.75,1223.51L1620.75,1189.84L1621.87,1189.84L1621.87,1202.47L1622.98,1202.47L1622.98,1202.47L1624.10,1202.47L1624.10,1202.47L1625.21,1202.47L1625.21,1143.55L1626.33,1143.55L1626.33,1067.80L1627.44,1067.80L1627.44,1034.13L1628.56,1034.13L1628.56,1008.88L1629.67,1008.88L1629.67,1072.01L1630.79,1072.01L1630.79,1042.55L1631.90,1042.55L1631.90,1135.13L1633.02,1135.13L1633.02,1130.92L1634.13,1130.92L1634.13,1038.34L1635.25,1038.34L1635.25,1084.63L1636.36,1084.63L1636.36,1017.30L1637.48,1017.30L1637.48,1080.42L1638.59,1080.42L1638.59,1059.38L1639.71,1059.38L1639.71,1055.17L1640.82,1055.17L1640.82,1076.22L1641.94,1076.22L1641.94,1055.17L1643.05,1055.17L1643.05,1042.55L1644.17,1042.55L1644.17,1004.67L1645.28,1004.67L1645.28,1055.17L1646.40,1055.17L1646.40,1029.92L1647.51,1029.92L1647.51,1072.01L1648.63,1072.01L1648.63,1109.88L1649.74,1109.88L1649.74,1097.26L1650.86,1097.26L1650.86,1072.01L1651.97,1072.01L1651.97,1139.34L1653.09,1139.34L1653.09,1135.13L1654.20,1135.13L1654.20,1143.55L1655.32,1143.55L1655.32,1177.22L1656.43,1177.22L1656.43,1160.38L1657.55,1160.38L1657.55,1189.84L1658.66,1189.84L1658.66,1206.67L1659.78,1206.67L1659.78,1215.09L1660.89,1215.09L1660.89,1194.05L1662.01,1194.05L1662.01,1168.80L1663.12,1168.80L1663.12,1093.05L1664.24,1093.05L1664.24,1114.09L1665.35,1114.09L1665.35,1055.17L1666.47,1055.17L1666.47,1084.63L1667.58,1084.63L1667.58,1109.88L1668.70,1109.88L1668.70,1130.92L1669.81,1130.92L1669.81,1168.80L1670.93,1168.80L1670.93,1173.01L1672.04,1173.01L1672.04,1189.84L1673.16,1189.84L1673.16,1189.84L1674.27,1189.84L1674.27,1194.05L1675.39,1194.05L1675.39,1202.47L1676.50,1202.47L1676.50,1198.26L1677.62,1198.26L1677.62,1194.05L1678.73,1194.05L1678.73,1198.26L1679.85,1198.26L1679.85,1320.3Z" fill="#24906f"/>
<path d="M1679.85,1320.3L1679.85,1215.09L1680.96,1215.09L1680.96,1215.09L1682.08,1215.09L1682.08,1219.30L1683.19,1219.30L1683.19,1219.30L1684.31,1219.30L1684.31,1223.51L1685.42,1223.51L1685.42,1223.51L1686.54,1223.51L1686.54,1227.72L1687.65,1227.72L1687.65,1240.34L1688.77,1240.34L1688.77,1240.34L1689.88,1240.34L1689.88,1227.72L1691.00,1227.72L1691.00,1231.92L1692.11,1231.92L1692.11,1236.13L1693.22,1236.13L1693.22,1231.92L1694.34,1231.92L1694.34,1223.51L1695.45,1223.51L1695.45,1227.72L1696.57,1227.72L1696.57,1231.92L1697.68,1231.92L1697.68,1223.51L1698.80,1223.51L1698.80,1227.72L1699.91,1227.72L1699.91,1231.92L1701.03,1231.92L1701.03,1223.51L1702.14,1223.51L1702.14,1227.72L1703.26,1227.72L1703.26,1219.30L1704.37,1219.30L1704.37,1219.30L1705.49,1219.30L1705.49,1223.51L1706.60,1223.51L1706.60,1223.51L1707.72,1223.51L1707.72,1223.51L1708.83,1223.51L1708.83,1223.51L1709.95,1223.51L1709.95,1227.72L1711.06,1227.72L1711.06,1227.72L1712.18,1227.72L1712.18,1219.30L1713.29,1219.30L1713.29,1215.09L1714.41,1215.09L1714.41,1215.09L1715.52,1215.09L1715.52,1219.30L1716.64,1219.30L1716.64,1223.51L1717.75,1223.51L1717.75,1215.09L1718.87,1215.09L1718.87,1215.09L1719.98,1215.09L1719.98,1219.30L1721.10,1219.30L1721.10,1215.09L1722.21,1215.09L1722.21,1215.09L1723.33,1215.09L1723.33,1219.30L1724.44,1219.30L1724.44,1215.09L1725.56,1215.09L1725.56,1210.88L1726.67,1210.88L1726.67,1210.88L1727.79,1210.88L1727.79,1215.09L1728.90,1215.09L1728.90,1215.09L1730.02,1215.09L1730.02,1206.67L1731.13,1206.67L1731.13,1206.67L1732.25,1206.67L1732.25,1206.67L1733.36,1206.67L1733.36,1248.76L1734.48,1248.76L1734.48,1244.55L1735.59,1244.55L1735.59,1244.55L1736.71,1244.55L1736.71,1240.34L1737.82,1240.34L1737.82,1244.55L1738.94,1244.55L1738.94,1244.55L1740.05,1244.55L1740.05,1248.76L1741.17,1248.76L1741.17,1244.55L1742.28,1244.55L1742.28,1244.55L1743.40,1244.55L1743.40,1244.55L1744.51,1244.55L1744.51,1244.55L1745.63,1244.55L1745.63,1240.34L1746.74,1240.34L1746.74,1244.55L1747.86,1244.55L1747.86,1244.55L1748.97,1244.55L1748.97,1244.55L1750.09,1244.55L1750.09,1244.55L1751.20,1244.55L1751.20,1244.55L1752.32,1244.55L1752.32,1240.34L1753.43,1240.34L1753.43,1240.34L1754.55,1240.34L1754.55,1248.76L1755.66,1248.76L1755.66,1240.34L1756.78,1240.34L1756.78,1244.55L1757.89,1244.55L1757.89,1240.34L1759.01,1240.34L1759.01,1244.55L1760.12,1244.55L1760.12,1244.55L1761.24,1244.55L1761.24,1240.34L1762.35,1240.34L1762.35,1244.55L1763.47,1244.55L1763.47,1240.34L1764.58,1240.34L1764.58,1240.34L1765.70,1240.34L1765.70,1244.55L1766.81,1244.55L1766.81,1244.55L1767.93,1244.55L1767.93,1244.55L1769.04,1244.55L1769.04,1244.55L1770.16,1244.55L1770.16,1244.55L1771.27,1244.55L1771.27,1244.55L1772.39,1244.55L1772.39,1244.55L1773.50,1244.55L1773.50,1248.76L1774.61,1248.76L1774.61,1244.55L1775.73,1244.55L1775.73,1248.76L1776.84,1248.76L1776.84,1244.55L1777.96,1244.55L1777.96,1240.34L1779.07,1240.34L1779.07,1244.55L1780.19,1244.55L1780.19,1244.55L1781.30,1244.55L1781.30,1244.55L1782.42,1244.55L1782.42,1248.76L1783.53,1248.76L1783.53,1244.55L1784.65,1244.55L1784.65,1244.55L1785.76,1244.55L1785.76,1244.55L1786.88,1244.55L1786.88,1240.34L1787.99,1240.34L1787.99,1244.55L1789.11,1244.55L1789.11,1244.55L1790.22,1244.55L1790.22,1244.55L1791.34,1244.55L1791.34,1244.55L1792.45,1244.55L1792.45,1244.55L1793.57,1244.55L1793.57,1244.55L1794.68,1244.55L1794.68,1244.55L1795.80,1244.55L1795.80,1244.55L1796.91,1244.55L1796.91,1240.34L1798.03,1240.34L1798.03,1244.55L1799.14,1244.55L1799.14,1244.55L1800.26,1244.55L1800.26,1244.55L1801.37,1244.55L1801.37,1244.55L1802.49,1244.55L1802.49,1244.55L1803.60,1244.55L1803.60,1244.55L1804.72,1244.55L1804.72,1248.76L1805.83,1248.76L1805.83,1244.55L1806.95,1244.55L1806.95,1244.55L1808.06,1244.55L1808.06,1244.55L1809.18,1244.55L1809.18,1240.34L1810.29,1240.34L1810.29,1244.55L1811.41,1244.55L1811.41,1244.55L1812.52,1244.55L1812.52,1244.55L1813.64,1244.55L1813.64,1244.55L1814.75,1244.55L1814.75,1244.55L1815.87,1244.55L1815.87,1244.55L1816.98,1244.55L1816.98,1240.34L1818.10,1240.34L1818.10,1244.55L1819.21,1244.55L1819.21,1244.55L1820.33,1244.55L1820.33,1244.55L1821.44,1244.55L1821.44,1240.34L1822.56,1240.34L1822.56,1244.55L1823.67,1244.55L1823.67,1244.55L1824.79,1244.55L1824.79,1244.55L1825.90,1244.55L1825.90,1244.55L1827.02,1244.55L1827.02,1244.55L1828.13,1244.55L1828.13,1244.55L1829.25,1244.55L1829.25,1248.76L1830.36,1248.76L1830.36,1244.55L1831.48,1244.55L1831.48,1244.55L1832.59,1244.55L1832.59,1248.76L1833.71,1248.76L1833.71,1244.55L1834.82,1244.55L1834.82,1244.55L1835.94,1244.55L1835.94,1244.55L1837.05,1244.55L1837.05,1244.55L1838.17,1244.55L1838.17,1244.55L1839.28,1244.55L1839.28,1248.76L1840.40,1248.76L1840.40,1202.47L1841.51,1202.47L1841.51,1202.47L1842.63,1202.47L1842.63,1206.67L1843.74,1206.67L1843.74,1202.47L1844.86,1202.47L1844.86,1206.67L1845.97,1206.67L1845.97,1206.67L1847.09,1206.67L1847.09,1206.67L1848.20,1206.67L1848.20,1206.67L1849.32,1206.67L1849.32,1202.47L1850.43,1202.47L1850.43,1202.47L1851.55,1202.47L1851.55,1206.67L1852.66,1206.67L1852.66,1206.67L1853.77,1206.67L1853.77,1320.3Z" fill="#a0edc3"/>
<path d="M1853.77,1320.3L1853.77,1206.67L1854.89,1206.67L1854.89,1202.47L1856.00,1202.47L1856.00,1210.88L1857.12,1210.88L1857.12,1202.47L1858.23,1202.47L1858.23,1202.47L1859.35,1202.47L1859.35,1206.67L1860.46,1206.67L1860.46,1210.88L1861.58,1210.88L1861.58,1210.88L1862.69,1210.88L1862.69,1206.67L1863.81,1206.67L1863.81,1202.47L1864.92,1202.47L1864.92,1198.26L1866.04,1198.26L1866.04,1202.47L1867.15,1202.47L1867.15,1202.47L1868.27,1202.47L1868.27,1198.26L1869.38,1198.26L1869.38,1202.47L1870.50,1202.47L1870.50,1168.80L1871.61,1168.80L1871.61,1147.76L1872.73,1147.76L1872.73,1173.01L1873.84,1173.01L1873.84,1177.22L1874.96,1177.22L1874.96,1185.63L1876.07,1185.63L1876.07,1185.63L1877.19,1185.63L1877.19,1181.42L1878.30,1181.42L1878.30,1029.92L1879.42,1029.92L1879.42,1080.42L1880.53,1080.42L1880.53,992.05L1881.65,992.05L1881.65,1109.88L1882.76,1109.88L1882.76,1084.63L1883.88,1084.63L1883.88,1130.92L1884.99,1130.92L1884.99,1168.80L1886.11,1168.80L1886.11,1168.80L1887.22,1168.80L1887.22,1181.42L1888.34,1181.42L1888.34,1151.97L1889.45,1151.97L1889.45,1101.47L1890.57,1101.47L1890.57,1004.67L1891.68,1004.67L1891.68,1063.59L1892.80,1063.59L1892.80,1013.09L1893.91,1013.09L1893.91,1076.22L1895.03,1076.22L1895.03,1088.84L1896.14,1088.84L1896.14,1118.30L1897.26,1118.30L1897.26,1042.55L1898.37,1042.55L1898.37,1042.55L1899.49,1042.55L1899.49,1114.09L1900.60,1114.09L1900.60,1088.84L1901.72,1088.84L1901.72,1114.09L1902.83,1114.09L1902.83,1021.51L1903.95,1021.51L1903.95,979.42L1905.06,979.42L1905.06,1059.38L1906.18,1059.38L1906.18,1067.80L1907.29,1067.80L1907.29,1097.26L1908.41,1097.26L1908.41,1105.67L1909.52,1105.67L1909.52,1042.55L1910.64,1042.55L1910.64,1076.22L1911.75,1076.22L1911.75,1004.67L1912.87,1004.67L1912.87,1093.05L1913.98,1093.05L1913.98,1088.84L1915.10,1088.84L1915.10,1139.34L1916.21,1139.34L1916.21,1151.97L1917.33,1151.97L1917.33,1151.97L1918.44,1151.97L1918.44,1135.13L1919.56,1135.13L1919.56,1164.59L1920.67,1164.59L1920.67,1151.97L1921.79,1151.97L1921.79,1177.22L1922.90,1177.22L1922.90,1164.59L1924.02,1164.59L1924.02,1164.59L1925.13,1164.59L1925.13,1135.13L1926.25,1135.13L1926.25,1139.34L1927.36,1139.34L1927.36,1130.92L1928.48,1130.92L1928.48,1046.76L1929.59,1046.76L1929.59,1088.84L1930.71,1088.84L1930.71,1143.55L1931.82,1143.55L1931.82,1139.34L1932.94,1139.34L1932.94,1160.38L1934.05,1160.38L1934.05,1173.01L1935.16,1173.01L1935.16,1181.42L1936.28,1181.42L1936.28,1189.84L1937.39,1189.84L1937.39,1194.05L1938.51,1194.05L1938.51,1206.67L1939.62,1206.67L1939.62,1202.47L1940.74,1202.47L1940.74,1189.84L1941.85,1189.84L1941.85,1198.26L1942.97,1198.26L1942.97,1189.84L1944.08,1189.84L1944.08,1198.26L1945.20,1198.26L1945.20,1202.47L1946.31,1202.47L1946.31,1202.47L1947.43,1202.47L1947.43,1198.26L1948.54,1198.26L1948.54,1198.26L1949.66,1198.26L1949.66,1194.05L1950.77,1194.05L1950.77,1160.38L1951.89,1160.38L1951.89,1143.55L1953.00,1143.55L1953.00,1093.05L1954.12,1093.05L1954.12,1097.26L1955.23,1097.26L1955.23,1080.42L1956.35,1080.42L1956.35,1143.55L1957.46,1143.55L1957.46,1135.13L1958.58,1135.13L1958.58,1118.30L1959.69,1118.30L1959.69,1080.42L1960.81,1080.42L1960.81,1050.97L1961.92,1050.97L1961.92,1072.01L1963.04,1072.01L1963.04,1000.47L1964.15,1000.47L1964.15,1055.17L1965.27,1055.17L1965.27,1008.88L1966.38,1008.88L1966.38,1105.67L1967.50,1105.67L1967.50,1164.59L1968.61,1164.59L1968.61,1185.63L1969.73,1185.63L1969.73,1185.63L1970.84,1185.63L1970.84,1194.05L1971.96,1194.05L1971.96,1189.84L1973.07,1189.84L1973.07,1189.84L1974.19,1189.84L1974.19,1194.05L1975.30,1194.05L1975.30,1189.84L1976.42,1189.84L1976.42,1189.84L1977.53,1189.84L1977.53,1173.01L1978.65,1173.01L1978.65,1160.38L1979.76,1160.38L1979.76,1118.30L1980.88,1118.30L1980.88,1122.51L1981.99,1122.51L1981.99,1084.63L1983.11,1084.63L1983.11,1059.38L1984.22,1059.38L1984.22,1097.26L1985.34,1097.26L1985.34,1076.22L1986.45,1076.22L1986.45,1160.38L1987.57,1160.38L1987.57,1173.01L1988.68,1173.01L1988.68,1185.63L1989.80,1185.63L1989.80,1189.84L1990.91,1189.84L1990.91,1189.84L1992.03,1189.84L1992.03,1202.47L1993.14,1202.47L1993.14,1223.51L1994.26,1223.51L1994.26,1227.72L1995.37,1227.72L1995.37,1223.51L1996.49,1223.51L1996.49,1223.51L1997.60,1223.51L1997.60,1227.72L1998.72,1227.72L1998.72,1223.51L1999.83,1223.51L1999.83,1219.30L2000.95,1219.30L2000.95,1320.3Z" fill="#24906f"/>
<path d="M2000.95,1320.3L2000.95,1231.92L2002.06,1231.92L2002.06,1231.92L2003.18,1231.92L2003.18,1231.92L2004.29,1231.92L2004.29,1231.92L2005.41,1231.92L2005.41,1231.92L2006.52,1231.92L2006.52,1231.92L2007.64,1231.92L2007.64,1231.92L2008.75,1231.92L2008.75,1231.92L2009.87,1231.92L2009.87,1231.92L2010.98,1231.92L2010.98,1231.92L2012.10,1231.92L2012.10,1231.92L2013.21,1231.92L2013.21,1231.92L2014.33,1231.92L2014.33,1231.92L2015.44,1231.92L2015.44,1231.92L2016.55,1231.92L2016.55,1227.72L2017.67,1227.72L2017.67,1227.72L2018.78,1227.72L2018.78,1227.72L2019.90,1227.72L2019.90,1227.72L2021.01,1227.72L2021.01,1223.51L2022.13,1223.51L2022.13,1223.51L2023.24,1223.51L2023.24,1227.72L2024.36,1227.72L2024.36,1227.72L2025.47,1227.72L2025.47,1227.72L2026.59,1227.72L2026.59,1223.51L2027.70,1223.51L2027.70,1223.51L2028.82,1223.51L2028.82,1227.72L2029.93,1227.72L2029.93,1227.72L2031.05,1227.72L2031.05,1227.72L2032.16,1227.72L2032.16,1227.72L2033.28,1227.72L2033.28,1227.72L2034.39,1227.72L2034.39,1227.72L2035.51,1227.72L2035.51,1227.72L2036.62,1227.72L2036.62,1227.72L2037.74,1227.72L2037.74,1227.72L2038.85,1227.72L2038.85,1223.51L2039.97,1223.51L2039.97,1227.72L2041.08,1227.72L2041.08,1227.72L2042.20,1227.72L2042.20,1227.72L2043.31,1227.72L2043.31,1227.72L2044.43,1227.72L2044.43,1223.51L2045.54,1223.51L2045.54,1223.51L2046.66,1223.51L2046.66,1227.72L2047.77,1227.72L2047.77,1227.72L2048.89,1227.72L2048.89,1227.72L2050.00,1227.72L2050.00,1227.72L2051.12,1227.72L2051.12,1227.72L2052.23,1227.72L2052.23,1227.72L2053.35,1227.72L2053.35,1227.72L2054.46,1227.72L2054.46,1261.38L2055.58,1261.38L2055.58,1257.17L2056.69,1257.17L2056.69,1257.17L2057.81,1257.17L2057.81,1257.17L2058.92,1257.17L2058.92,1257.17L2060.04,1257.17L2060.04,1257.17L2061.15,1257.17L2061.15,1257.17L2062.27,1257.17L2062.27,1261.38L2063.38,1261.38L2063.38,1252.97L2064.50,1252.97L2064.50,1257.17L2065.61,1257.17L2065.61,1261.38L2066.73,1261.38L2066.73,1261.38L2067.84,1261.38L2067.84,1257.17L2068.96,1257.17L2068.96,1257.17L2070.07,1257.17L2070.07,1257.17L2071.19,1257.17L2071.19,1257.17L2072.30,1257.17L2072.30,1252.97L2073.42,1252.97L2073.42,1257.17L2074.53,1257.17L2074.53,1257.17L2075.65,1257.17L2075.65,1257.17L2076.76,1257.17L2076.76,1257.17L2077.88,1257.17L2077.88,1261.38L2078.99,1261.38L2078.99,1257.17L2080.11,1257.17L2080.11,1257.17L2081.22,1257.17L2081.22,1257.17L2082.34,1257.17L2082.34,1257.17L2083.45,1257.17L2083.45,1257.17L2084.57,1257.17L2084.57,1257.17L2085.68,1257.17L2085.68,1252.97L2086.80,1252.97L2086.80,1257.17L2087.91,1257.17L2087.91,1257.17L2089.03,1257.17L2089.03,1257.17L2090.14,1257.17L2090.14,1257.17L2091.26,1257.17L2091.26,1257.17L2092.37,1257.17L2092.37,1257.17L2093.49,1257.17L2093.49,1252.97L2094.60,1252.97L2094.60,1257.17L2095.71,1257.17L2095.71,1252.97L2096.83,1252.97L2096.83,1261.38L2097.94,1261.38L2097.94,1257.17L2099.06,1257.17L2099.06,1252.97L2100.17,1252.97L2100.17,1252.97L2101.29,1252.97L2101.29,1257.17L2102.40,1257.17L2102.40,1257.17L2103.52,1257.17L2103.52,1257.17L2104.63,1257.17L2104.63,1257.17L2105.75,1257.17L2105.75,1257.17L2106.86,1257.17L2106.86,1257.17L2107.98,1257.17L2107.98,1252.97L2109.09,1252.97L2109.09,1257.17L2110.21,1257.17L2110.21,1257.17L2111.32,1257.17L2111.32,1252.97L2112.44,1252.97L2112.44,1257.17L2113.55,1257.17L2113.55,1252.97L2114.67,1252.97L2114.67,1257.17L2115.78,1257.17L2115.78,1252.97L2116.90,1252.97L2116.90,1252.97L2118.01,1252.97L2118.01,1257.17L2119.13,1257.17L2119.13,1252.97L2120.24,1252.97L2120.24,1257.17L2121.36,1257.17L2121.36,1252.97L2122.47,1252.97L2122.47,1257.17L2123.59,1257.17L2123.59,1252.97L2124.70,1252.97L2124.70,1257.17L2125.82,1257.17L2125.82,1252.97L2126.93,1252.97L2126.93,1252.97L2128.05,1252.97L2128.05,1257.17L2129.16,1257.17L2129.16,1252.97L2130.28,1252.97L2130.28,1257.17L2131.39,1257.17L2131.39,1257.17L2132.51,1257.17L2132.51,1252.97L2133.62,1252.97L2133.62,1257.17L2134.74,1257.17L2134.74,1252.97L2135.85,1252.97L2135.85,1257.17L2136.97,1257.17L2136.97,1257.17L2138.08,1257.17L2138.08,1257.17L2139.20,1257.17L2139.20,1252.97L2140.31,1252.97L2140.31,1257.17L2141.43,1257.17L2141.43,1261.38L2142.54,1261.38L2142.54,1244.55L2143.66,1244.55L2143.66,1248.76L2144.77,1248.76L2144.77,1252.97L2145.89,1252.97L2145.89,1252.97L2147.00,1252.97L2147.00,1252.97L2148.12,1252.97L2148.12,1252.97L2149.23,1252.97L2149.23,1257.17L2150.35,1257.17L2150.35,1252.97L2151.46,1252.97L2151.46,1257.17L2152.58,1257.17L2152.58,1252.97L2153.69,1252.97L2153.69,1252.97L2154.81,1252.97L2154.81,1257.17L2155.92,1257.17L2155.92,1248.76L2157.04,1248.76L2157.04,1248.76L2158.15,1248.76L2158.15,1252.97L2159.27,1252.97L2159.27,1257.17L2160.38,1257.17L2160.38,1252.97L2161.50,1252.97L2161.50,1223.51L2162.61,1223.51L2162.61,1210.88L2163.73,1210.88L2163.73,1219.30L2164.84,1219.30L2164.84,1210.88L2165.96,1210.88L2165.96,1215.09L2167.07,1215.09L2167.07,1219.30L2168.19,1219.30L2168.19,1215.09L2169.30,1215.09L2169.30,1210.88L2170.42,1210.88L2170.42,1215.09L2171.53,1215.09L2171.53,1210.88L2172.65,1210.88L2172.65,1210.88L2173.76,1210.88L2173.76,1219.30L2174.88,1219.30L2174.88,1320.3Z" fill="#a0edc3"/>
<path d="M2174.88,1320.3L2174.88,1210.88L2175.99,1210.88L2175.99,1219.30L2177.10,1219.30L2177.10,1215.09L2178.22,1215.09L2178.22,1215.09L2179.33,1215.09L2179.33,1215.09L2180.45,1215.09L2180.45,1210.88L2181.56,1210.88L2181.56,1215.09L2182.68,1215.09L2182.68,1215.09L2183.79,1215.09L2183.79,1215.09L2184.91,1215.09L2184.91,1215.09L2186.02,1215.09L2186.02,1215.09L2187.14,1215.09L2187.14,1215.09L2188.25,1215.09L2188.25,1219.30L2189.37,1219.30L2189.37,1215.09L2190.48,1215.09L2190.48,1215.09L2191.60,1215.09L2191.60,1210.88L2192.71,1210.88L2192.71,1160.38L2193.83,1160.38L2193.83,1185.63L2194.94,1185.63L2194.94,1034.13L2196.06,1034.13L2196.06,987.84L2197.17,987.84L2197.17,1000.47L2198.29,1000.47L2198.29,1021.51L2199.40,1021.51L2199.40,983.63L2200.52,983.63L2200.52,1029.92L2201.63,1029.92L2201.63,1034.13L2202.75,1034.13L2202.75,1034.13L2203.86,1034.13L2203.86,992.05L2204.98,992.05L2204.98,1025.72L2206.09,1025.72L2206.09,1084.63L2207.21,1084.63L2207.21,1164.59L2208.32,1164.59L2208.32,1135.13L2209.44,1135.13L2209.44,1114.09L2210.55,1114.09L2210.55,1126.72L2211.67,1126.72L2211.67,1021.51L2212.78,1021.51L2212.78,1000.47L2213.90,1000.47L2213.90,975.22L2215.01,975.22L2215.01,1055.17L2216.13,1055.17L2216.13,1181.42L2217.24,1181.42L2217.24,1177.22L2218.36,1177.22L2218.36,1181.42L2219.47,1181.42L2219.47,1185.63L2220.59,1185.63L2220.59,1181.42L2221.70,1181.42L2221.70,1210.88L2222.82,1210.88L2222.82,1206.67L2223.93,1206.67L2223.93,1210.88L2225.05,1210.88L2225.05,1210.88L2226.16,1210.88L2226.16,1139.34L2227.28,1139.34L2227.28,1076.22L2228.39,1076.22L2228.39,1156.17L2229.51,1156.17L2229.51,1114.09L2230.62,1114.09L2230.62,1093.05L2231.74,1093.05L2231.74,1072.01L2232.85,1072.01L2232.85,1050.97L2233.97,1050.97L2233.97,1072.01L2235.08,1072.01L2235.08,1156.17L2236.20,1156.17L2236.20,1126.72L2237.31,1126.72L2237.31,1168.80L2238.43,1168.80L2238.43,1202.47L2239.54,1202.47L2239.54,1168.80L2240.66,1168.80L2240.66,1126.72L2241.77,1126.72L2241.77,1101.47L2242.89,1101.47L2242.89,1126.72L2244.00,1126.72L2244.00,1130.92L2245.12,1130.92L2245.12,1118.30L2246.23,1118.30L2246.23,1143.55L2247.35,1143.55L2247.35,1156.17L2248.46,1156.17L2248.46,1122.51L2249.58,1122.51L2249.58,1143.55L2250.69,1143.55L2250.69,1168.80L2251.81,1168.80L2251.81,1194.05L2252.92,1194.05L2252.92,1181.42L2254.04,1181.42L2254.04,1189.84L2255.15,1189.84L2255.15,1198.26L2256.26,1198.26L2256.26,1231.92L2257.38,1231.92L2257.38,1227.72L2258.49,1227.72L2258.49,1240.34L2259.61,1240.34L2259.61,1236.13L2260.72,1236.13L2260.72,1244.55L2261.84,1244.55L2261.84,1227.72L2262.95,1227.72L2262.95,1236.13L2264.07,1236.13L2264.07,1236.13L2265.18,1236.13L2265.18,1202.47L2266.30,1202.47L2266.30,1210.88L2267.41,1210.88L2267.41,1210.88L2268.53,1210.88L2268.53,1206.67L2269.64,1206.67L2269.64,1219.30L2270.76,1219.30L2270.76,1223.51L2271.87,1223.51L2271.87,1236.13L2272.99,1236.13L2272.99,1231.92L2274.10,1231.92L2274.10,1240.34L2275.22,1240.34L2275.22,1194.05L2276.33,1194.05L2276.33,1168.80L2277.45,1168.80L2277.45,1210.88L2278.56,1210.88L2278.56,1223.51L2279.68,1223.51L2279.68,1210.88L2280.79,1210.88L2280.79,1210.88L2281.91,1210.88L2281.91,1236.13L2283.02,1236.13L2283.02,1223.51L2284.14,1223.51L2284.14,1236.13L2285.25,1236.13L2285.25,1231.92L2286.37,1231.92L2286.37,1198.26L2287.48,1198.26L2287.48,1147.76L2288.60,1147.76L2288.60,1151.97L2289.71,1151.97L2289.71,1194.05L2290.83,1194.05L2290.83,1206.67L2291.94,1206.67L2291.94,1198.26L2293.06,1198.26L2293.06,1198.26L2294.17,1198.26L2294.17,1198.26L2295.29,1198.26L2295.29,1240.34L2296.40,1240.34L2296.40,1240.34L2297.52,1240.34L2297.52,1244.55L2298.63,1244.55L2298.63,1244.55L2299.75,1244.55L2299.75,1236.13L2300.86,1236.13L2300.86,1244.55L2301.98,1244.55L2301.98,1240.34L2303.09,1240.34L2303.09,1240.34L2304.21,1240.34L2304.21,1248.76L2305.32,1248.76L2305.32,1252.97L2306.44,1252.97L2306.44,1248.76L2307.55,1248.76L2307.55,1248.76L2308.67,1248.76L2308.67,1252.97L2309.78,1252.97L2309.78,1248.76L2310.90,1248.76L2310.90,1244.55L2312.01,1244.55L2312.01,1252.97L2313.13,1252.97L2313.13,1248.76L2314.24,1248.76L2314.24,1240.34L2315.36,1240.34L2315.36,1248.76L2316.47,1248.76L2316.47,1248.76L2317.59,1248.76L2317.59,1248.76L2318.70,1248.76L2318.70,1244.55L2319.82,1244.55L2319.82,1244.55L2320.93,1244.55L2320.93,1244.55L2322.05,1244.55L2322.05,1320.3Z" fill="#24906f"/>
<path d="M2322.05,1320.3L2322.05,1248.76L2323.16,1248.76L2323.16,1244.55L2324.28,1244.55L2324.28,1244.55L2325.39,1244.55L2325.39,1244.55L2326.51,1244.55L2326.51,1244.55L2327.62,1244.55L2327.62,1248.76L2328.74,1248.76L2328.74,1240.34L2329.85,1240.34L2329.85,1244.55L2330.97,1244.55L2330.97,1244.55L2332.08,1244.55L2332.08,1240.34L2333.20,1240.34L2333.20,1231.92L2334.31,1231.92L2334.31,1236.13L2335.43,1236.13L2335.43,1240.34L2336.54,1240.34L2336.54,1240.34L2337.65,1240.34L2337.65,1236.13L2338.77,1236.13L2338.77,1231.92L2339.88,1231.92L2339.88,1236.13L2341.00,1236.13L2341.00,1236.13L2342.11,1236.13L2342.11,1240.34L2343.23,1240.34L2343.23,1236.13L2344.34,1236.13L2344.34,1236.13L2345.46,1236.13L2345.46,1240.34L2346.57,1240.34L2346.57,1236.13L2347.69,1236.13L2347.69,1236.13L2348.80,1236.13L2348.80,1236.13L2349.92,1236.13L2349.92,1236.13L2351.03,1236.13L2351.03,1236.13L2352.15,1236.13L2352.15,1236.13L2353.26,1236.13L2353.26,1236.13L2354.38,1236.13L2354.38,1231.92L2355.49,1231.92L2355.49,1236.13L2356.61,1236.13L2356.61,1236.13L2357.72,1236.13L2357.72,1236.13L2358.84,1236.13L2358.84,1231.92L2359.95,1231.92L2359.95,1236.13L2361.07,1236.13L2361.07,1231.92L2362.18,1231.92L2362.18,1236.13L2363.30,1236.13L2363.30,1231.92L2364.41,1231.92L2364.41,1236.13L2365.53,1236.13L2365.53,1236.13L2366.64,1236.13L2366.64,1231.92L2367.76,1231.92L2367.76,1231.92L2368.87,1231.92L2368.87,1236.13L2369.99,1236.13L2369.99,1227.72L2371.10,1227.72L2371.10,1231.92L2372.22,1231.92L2372.22,1231.92L2373.33,1231.92L2373.33,1236.13L2374.45,1236.13L2374.45,1231.92L2375.56,1231.92L2375.56,1257.17L2376.68,1257.17L2376.68,1269.80L2377.79,1269.80L2377.79,1269.80L2378.91,1269.80L2378.91,1265.59L2380.02,1265.59L2380.02,1265.59L2381.14,1265.59L2381.14,1265.59L2382.25,1265.59L2382.25,1269.80L2383.37,1269.80L2383.37,1269.80L2384.48,1269.80L2384.48,1265.59L2385.60,1265.59L2385.60,1265.59L2386.71,1265.59L2386.71,1269.80L2387.83,1269.80L2387.83,1269.80L2388.94,1269.80L2388.94,1265.59L2390.06,1265.59L2390.06,1265.59L2391.17,1265.59L2391.17,1265.59L2392.29,1265.59L2392.29,1265.59L2393.40,1265.59L2393.40,1261.38L2394.52,1261.38L2394.52,1265.59L2395.63,1265.59L2395.63,1265.59L2396.75,1265.59L2396.75,1261.38L2397.86,1261.38L2397.86,1261.38L2398.98,1261.38L2398.98,1265.59L2400.09,1265.59L2400.09,1257.17L2401.21,1257.17L2401.21,1265.59L2402.32,1265.59L2402.32,1257.17L2403.44,1257.17L2403.44,1265.59L2404.55,1265.59L2404.55,1261.38L2405.67,1261.38L2405.67,1252.97L2406.78,1252.97L2406.78,1261.38L2407.90,1261.38L2407.90,1261.38L2409.01,1261.38L2409.01,1261.38L2410.13,1261.38L2410.13,1261.38L2411.24,1261.38L2411.24,1261.38L2412.36,1261.38L2412.36,1257.17L2413.47,1257.17L2413.47,1257.17L2414.59,1257.17L2414.59,1320.3Z" fill="#a0edc3"/>
<line x1="167.5" y1="815.3" x2="167.5" y2="1321.3" stroke="#444" stroke-width="1.6"/>
<line x1="167.0" y1="1321.1" x2="2415.7000000000003" y2="1321.1" stroke="#6f6f6f" stroke-width="1"/>
<line x1="168.0" y1="1320.1" x2="2415.7000000000003" y2="1320.1" stroke="#c4c4c4" stroke-width="1"/>
<line x1="168.5" y1="1321.3" x2="168.5" y2="1332.3" stroke="#999" stroke-width="1"/>
<line x1="489.5" y1="1321.3" x2="489.5" y2="1332.3" stroke="#999" stroke-width="1"/>
<line x1="810.5" y1="1321.3" x2="810.5" y2="1332.3" stroke="#999" stroke-width="1"/>
<line x1="1131.5" y1="1321.3" x2="1131.5" y2="1332.3" stroke="#999" stroke-width="1"/>
<line x1="1452.5" y1="1321.3" x2="1452.5" y2="1332.3" stroke="#999" stroke-width="1"/>
<line x1="1774.5" y1="1321.3" x2="1774.5" y2="1332.3" stroke="#999" stroke-width="1"/>
<line x1="2095.5" y1="1321.3" x2="2095.5" y2="1332.3" stroke="#999" stroke-width="1"/>
<g style='font-family:"Liberation Sans", sans-serif'>
<text x="146.30" y="1326.70" font-size="21.3" fill="#333" text-anchor="end" font-weight="normal" textLength="12.70" lengthAdjust="spacingAndGlyphs"  xml:space="preserve">0</text>
<text x="146.30" y="1242.53" font-size="21.3" fill="#333" text-anchor="end" font-weight="normal" textLength="25.40" lengthAdjust="spacingAndGlyphs"  xml:space="preserve">20</text>
<text x="146.30" y="1158.37" font-size="21.3" fill="#333" text-anchor="end" font-weight="normal" textLength="25.40" lengthAdjust="spacingAndGlyphs"  xml:space="preserve">40</text>
<text x="146.30" y="1074.20" font-size="21.3" fill="#333" text-anchor="end" font-weight="normal" textLength="25.40" lengthAdjust="spacingAndGlyphs"  xml:space="preserve">60</text>
<text x="146.30" y="990.03" font-size="21.3" fill="#333" text-anchor="end" font-weight="normal" textLength="25.40" lengthAdjust="spacingAndGlyphs"  xml:space="preserve">80</text>
<text x="146.30" y="905.87" font-size="21.3" fill="#333" text-anchor="end" font-weight="normal" textLength="38.10" lengthAdjust="spacingAndGlyphs"  xml:space="preserve">100</text>
<text x="146.30" y="821.70" font-size="21.3" fill="#333" text-anchor="end" font-weight="normal" textLength="38.10" lengthAdjust="spacingAndGlyphs"  xml:space="preserve">120</text>
<text x="168.70" y="1357.30" font-size="22.2" fill="#111" text-anchor="middle" font-weight="normal" textLength="82.50" lengthAdjust="spacingAndGlyphs"  xml:space="preserve">sam. 24</text>
<text x="489.80" y="1357.30" font-size="22.2" fill="#111" text-anchor="middle" font-weight="normal" textLength="77.90" lengthAdjust="spacingAndGlyphs"  xml:space="preserve">dim. 25</text>
<text x="810.70" y="1357.30" font-size="22.2" fill="#111" text-anchor="middle" font-weight="normal" textLength="71.10" lengthAdjust="spacingAndGlyphs"  xml:space="preserve">lun. 26</text>
<text x="1131.20" y="1357.30" font-size="22.2" fill="#111" text-anchor="middle" font-weight="normal" textLength="76.80" lengthAdjust="spacingAndGlyphs"  xml:space="preserve">mar. 27</text>
<text x="1452.60" y="1357.30" font-size="22.2" fill="#111" text-anchor="middle" font-weight="normal" textLength="78.60" lengthAdjust="spacingAndGlyphs"  xml:space="preserve">mer. 28</text>
<text x="1773.50" y="1357.30" font-size="22.2" fill="#111" text-anchor="middle" font-weight="normal" textLength="72.40" lengthAdjust="spacingAndGlyphs"  xml:space="preserve">jeu. 29</text>
<text x="2095.00" y="1357.30" font-size="22.2" fill="#111" text-anchor="middle" font-weight="normal" textLength="75.60" lengthAdjust="spacingAndGlyphs"  xml:space="preserve">ven. 30</text>
</g>
<text transform="translate(86.3,1067) rotate(-90)" font-size="24" fill="#333" text-anchor="middle" textLength="29.3" lengthAdjust="spacingAndGlyphs" style='font-family:"Liberation Sans", sans-serif'>kW</text>
<rect x="1990" y="50" width="416" height="47.7" rx="9" fill="#fff"/>
<rect x="1990" y="50" width="416" height="20" fill="#fff"/>
<text x="2114.00" y="90.00" font-size="26.5" fill="#000" text-anchor="start" font-weight="bold" textLength="168.00" lengthAdjust="spacingAndGlyphs" style='font-family:"Liberation Sans", sans-serif' xml:space="preserve">LHB-site-L01J</text>
<rect x="1992" y="108.3" width="412" height="57.10000000000001" rx="10" fill="#fff" stroke="#7f7f7f" stroke-width="4"/>
<text x="2053.00" y="148.30" font-size="29.3" fill="#000" text-anchor="start" font-weight="normal" textLength="310.00" lengthAdjust="spacingAndGlyphs" style='font-family:"Liberation Sans", sans-serif' xml:space="preserve">Consommation: 596 kWh</text>
<rect x="1992" y="178.8" width="412" height="56.39999999999998" rx="10" fill="#fff" stroke="#7f7f7f" stroke-width="4"/>
<text x="2115.00" y="218.30" font-size="29.3" fill="#000" text-anchor="start" font-weight="normal" textLength="187.00" lengthAdjust="spacingAndGlyphs" style='font-family:"Liberation Sans", sans-serif' xml:space="preserve">P Max :  82 kW</text>
<rect x="1992" y="248.6" width="412" height="56.099999999999994" rx="10" fill="#fff" stroke="#7f7f7f" stroke-width="4"/>
<text x="2120.80" y="288.50" font-size="29.3" fill="#000" text-anchor="start" font-weight="normal" textLength="174.60" lengthAdjust="spacingAndGlyphs" style='font-family:"Liberation Sans", sans-serif' xml:space="preserve">P min : 12 kW</text>
<rect x="562" y="806.3" width="411" height="57.40000000000009" rx="10" fill="#fff" stroke="#7f7f7f" stroke-width="4"/>
<text x="610.70" y="846.70" font-size="29.3" fill="#000" text-anchor="start" font-weight="normal" textLength="334.50" lengthAdjust="spacingAndGlyphs" style='font-family:"Liberation Sans", sans-serif' xml:space="preserve">Consommation: 4 312 kWh</text>
<rect x="1100.3" y="806.5" width="410.70000000000005" height="56.799999999999955" rx="10" fill="#fff" stroke="#7f7f7f" stroke-width="4"/>
<text x="1213.80" y="846.60" font-size="29.3" fill="#000" text-anchor="start" font-weight="normal" textLength="204.50" lengthAdjust="spacingAndGlyphs" style='font-family:"Liberation Sans", sans-serif' xml:space="preserve">P Max :  112 kW</text>
<rect x="1610.3" y="806.5" width="410.0" height="56.799999999999955" rx="10" fill="#fff" stroke="#7f7f7f" stroke-width="4"/>
<text x="1738.30" y="846.60" font-size="29.3" fill="#000" text-anchor="start" font-weight="normal" textLength="175.00" lengthAdjust="spacingAndGlyphs" style='font-family:"Liberation Sans", sans-serif' xml:space="preserve">P min : 11 kW</text>
<rect x="1047.8" y="542.2" width="521.9" height="70.1" rx="7" fill="#fff" fill-opacity="0.9"/>
<text x="1126.00" y="589.00" font-size="32" fill="#0a0f0d" text-anchor="start" font-weight="bold" textLength="376.80" lengthAdjust="spacingAndGlyphs" style='font-family:"Liberation Sans", sans-serif' xml:space="preserve">vendredi 30 janvier 2026</text>
<rect x="176.5" y="49" width="481.5" height="77.7" fill="#0a0a18"/>
<g fill="none" stroke-width="6.6" stroke-linecap="round" stroke-linejoin="round">
<g stroke="url(#ecog2)">
<path d="M191.5,95.5 H211 A10.2,11.8 0 1 0 207.5,105.5"/>
<path d="M240.5,85.5 A10.8,12 0 1 0 240.5,104.5"/>
<ellipse cx="257.2" cy="95" rx="10.2" ry="12"/>
</g>
<path d="M198.5,74 L205,71.5" stroke="#00f0c8" stroke-width="6"/>
<g stroke="#fff">
<path d="M275.5,85 L283,107 L291,87 L299,107 L314.5,67.5"/>
<ellipse cx="325" cy="96.5" rx="9" ry="10.5"/>
<path d="M336.5,85 V108"/>
<path d="M346.5,72.5 V101 Q346.5,107.5 353,107.5 M342,82 H353.5"/>
<path d="M363.5,72.5 V101 Q363.5,107.5 370,107.5 M359,82 H370.5"/>
</g></g>
<ellipse cx="433.5" cy="88.9" rx="25.5" ry="27.5" fill="#00b4e0"/>
<text x="418.80" y="96.50" font-size="22.5" fill="#fff" text-anchor="start" font-weight="normal" textLength="31.20" lengthAdjust="spacingAndGlyphs" style='font-family:"Liberation Sans", sans-serif' xml:space="preserve">Rte</text>
<text x="468.30" y="79.20" font-size="12.5" fill="#0ba3d2" text-anchor="start" font-weight="normal" textLength="48.40" lengthAdjust="spacingAndGlyphs" style='font-family:"Liberation Sans", sans-serif' xml:space="preserve">Le réseau</text>
<text x="468.30" y="92.70" font-size="12.5" fill="#0ba3d2" text-anchor="start" font-weight="normal" textLength="60.70" lengthAdjust="spacingAndGlyphs" style='font-family:"Liberation Sans", sans-serif' xml:space="preserve">de transport</text>
<text x="468.30" y="105.20" font-size="12.5" fill="#0ba3d2" text-anchor="start" font-weight="normal" textLength="57.00" lengthAdjust="spacingAndGlyphs" style='font-family:"Liberation Sans", sans-serif' xml:space="preserve">d’électricité</text>
<rect x="546" y="61.5" width="100.8" height="55.5" fill="#fff"/>
<rect x="553" y="68.5" width="7" height="7" fill="#000091"/><rect x="563" y="68.5" width="9" height="7" fill="#e1000f"/>
<text x="552.70" y="85.50" font-size="7.8" fill="#222" text-anchor="start" font-weight="bold" textLength="44.00" lengthAdjust="spacingAndGlyphs" style='font-family:"Liberation Sans", sans-serif' xml:space="preserve">RÉPUBLIQUE</text>
<text x="552.70" y="93.00" font-size="7.8" fill="#222" text-anchor="start" font-weight="bold" textLength="40.00" lengthAdjust="spacingAndGlyphs" style='font-family:"Liberation Sans", sans-serif' xml:space="preserve">FRANÇAISE</text>
<rect x="553" y="98" width="14" height="1.2" fill="#bbb"/><rect x="553" y="102.5" width="12" height="1.2" fill="#bbb"/><rect x="553" y="107" width="17" height="1.2" fill="#bbb"/>
<rect x="607.5" y="66.5" width="34.5" height="45" fill="#fff" stroke="#3a64b0" stroke-width="1"/>
<text x="611.00" y="75.20" font-size="7.5" fill="#e2141c" text-anchor="start" font-weight="bold" textLength="26.00" lengthAdjust="spacingAndGlyphs" style='font-family:"Liberation Sans", sans-serif' xml:space="preserve">ADEME</text>
<circle cx="624.5" cy="87.5" r="8.7" fill="#2c58aa"/><path d="M620,83 q4,2 3,6 q-2,3 2,6" stroke="#9db4e0" stroke-width="1.5" fill="none"/>
<rect x="611" y="99" width="26" height="1.6" fill="#f2a0a3"/><rect x="611" y="102.5" width="26" height="1.6" fill="#f2a0a3"/><rect x="611" y="106" width="26" height="1.6" fill="#f2a0a3"/>
<path d="M169.3,135.4H660.7V258.5H169.3ZM173,138.5H289V188.7H173ZM173,194.4H289V252.8H173ZM294.6,138.5H411V188.7H294.6ZM294.6,194.4H411V252.8H294.6ZM417,138.5H533.4V188.7H417ZM417,194.4H533.4V252.8H417ZM538.5,138.5H655V188.7H538.5ZM538.5,194.4H655V252.8H538.5Z" fill="#d9d9d9" fill-rule="evenodd"/>
<text x="231.30" y="175.20" font-size="34" fill="#000" text-anchor="middle" font-weight="normal" textLength="20.00" lengthAdjust="spacingAndGlyphs" style='font-family:"Liberation Sans", sans-serif' xml:space="preserve">J</text>
<text x="321.40" y="175.20" font-size="34" fill="#000" text-anchor="middle" font-weight="normal" textLength="20.00" lengthAdjust="spacingAndGlyphs" style='font-family:"Liberation Sans", sans-serif' xml:space="preserve">J</text>
<text x="353.80" y="175.20" font-size="33" fill="#000" text-anchor="middle" font-weight="normal" style='font-family:"Liberation Sans", sans-serif' xml:space="preserve">+</text>
<text x="384.90" y="175.20" font-size="33" fill="#000" text-anchor="middle" font-weight="normal" style='font-family:"Liberation Sans", sans-serif' xml:space="preserve">1</text>
<text x="443.20" y="175.20" font-size="34" fill="#000" text-anchor="middle" font-weight="normal" textLength="20.00" lengthAdjust="spacingAndGlyphs" style='font-family:"Liberation Sans", sans-serif' xml:space="preserve">J</text>
<text x="475.80" y="175.20" font-size="33" fill="#000" text-anchor="middle" font-weight="normal" style='font-family:"Liberation Sans", sans-serif' xml:space="preserve">+</text>
<text x="508.80" y="175.20" font-size="33" fill="#000" text-anchor="middle" font-weight="bold" style='font-family:"Liberation Sans", sans-serif' xml:space="preserve">2</text>
<text x="565.00" y="175.20" font-size="34" fill="#000" text-anchor="middle" font-weight="normal" textLength="20.00" lengthAdjust="spacingAndGlyphs" style='font-family:"Liberation Sans", sans-serif' xml:space="preserve">J</text>
<text x="597.80" y="175.20" font-size="33" fill="#000" text-anchor="middle" font-weight="normal" style='font-family:"Liberation Sans", sans-serif' xml:space="preserve">+</text>
<text x="631.00" y="175.20" font-size="33" fill="#000" text-anchor="middle" font-weight="bold" style='font-family:"Liberation Sans", sans-serif' xml:space="preserve">3</text>
<g transform="translate(180,195.4) scale(0.9981,0.9696)"><rect x="0" y="0" width="106" height="56" fill="url(#tealg)"/><path d="M14,0 C30,14 50,25 70,25 C85,25 98,21 106,17 L106,0 Z" fill="#00f0c8"/><path d="M27,0 C40,7 55,11 70,11 C85,11 98,7 106,4 L106,0 Z" fill="#00a88e"/></g>
<g transform="translate(301.8,196.2) scale(1.0019,0.9875)"><rect x="0" y="0" width="106" height="56" fill="url(#tealg)"/><path d="M14,0 C30,14 50,25 70,25 C85,25 98,21 106,17 L106,0 Z" fill="#00f0c8"/><path d="M27,0 C40,7 55,11 70,11 C85,11 98,7 106,4 L106,0 Z" fill="#00a88e"/></g>
<g transform="translate(424,196.2) scale(1.0000,0.9875)"><rect x="0" y="0" width="106" height="56" fill="url(#tealg)"/><path d="M14,0 C30,14 50,25 70,25 C85,25 98,21 106,17 L106,0 Z" fill="#00f0c8"/><path d="M27,0 C40,7 55,11 70,11 C85,11 98,7 106,4 L106,0 Z" fill="#00a88e"/></g>
<g transform="translate(544,196.2) scale(1.0000,0.9875)"><rect x="0" y="0" width="106" height="56" fill="url(#tealg)"/><path d="M14,0 C30,14 50,25 70,25 C85,25 98,21 106,17 L106,0 Z" fill="#00f0c8"/><path d="M27,0 C40,7 55,11 70,11 C85,11 98,7 106,4 L106,0 Z" fill="#00a88e"/></g>
<rect x="2322.5" y="1322" width="115.5" height="58" fill="#fff"/>
<g fill="none" stroke="#0a6eb8" stroke-width="5.2">
<path d="M2361.3,1343.8 A12.8,12.9 0 1 0 2362.2,1351.2 H2349.3" stroke-linecap="round"/>
<path d="M2369.4,1349.8 A7.4,7.6 0 1 1 2382.8,1352 L2371.6,1360.8 H2385.6" stroke-linecap="butt" stroke-linejoin="round"/>
</g>
<path d="M2392,1324.8 L2391.6,1335.3 L2399.9,1338.4 L2389.4,1363.4 L2391.6,1341.2 L2383.7,1338.4 Z" fill="#e85a2a"/>
<path d="M2403.4,1338.8 H2424.4 L2418.7,1345 H2400.8 Z M2399.5,1348 H2417.9 L2412.4,1354 H2397 Z M2395.5,1357 H2416.5 L2410.9,1363.4 H2393.1 Z" fill="#f29420"/>
<text x="2393.30" y="1334.80" font-size="8" fill="#e8643a" text-anchor="start" font-weight="bold" textLength="30.40" lengthAdjust="spacingAndGlyphs" style='font-family:"Liberation Sans", sans-serif' xml:space="preserve">FRANCE</text>
<rect x="2339.5" y="1366" width="74.4" height="1.8" fill="#a9cbea"/></svg></body></html>
